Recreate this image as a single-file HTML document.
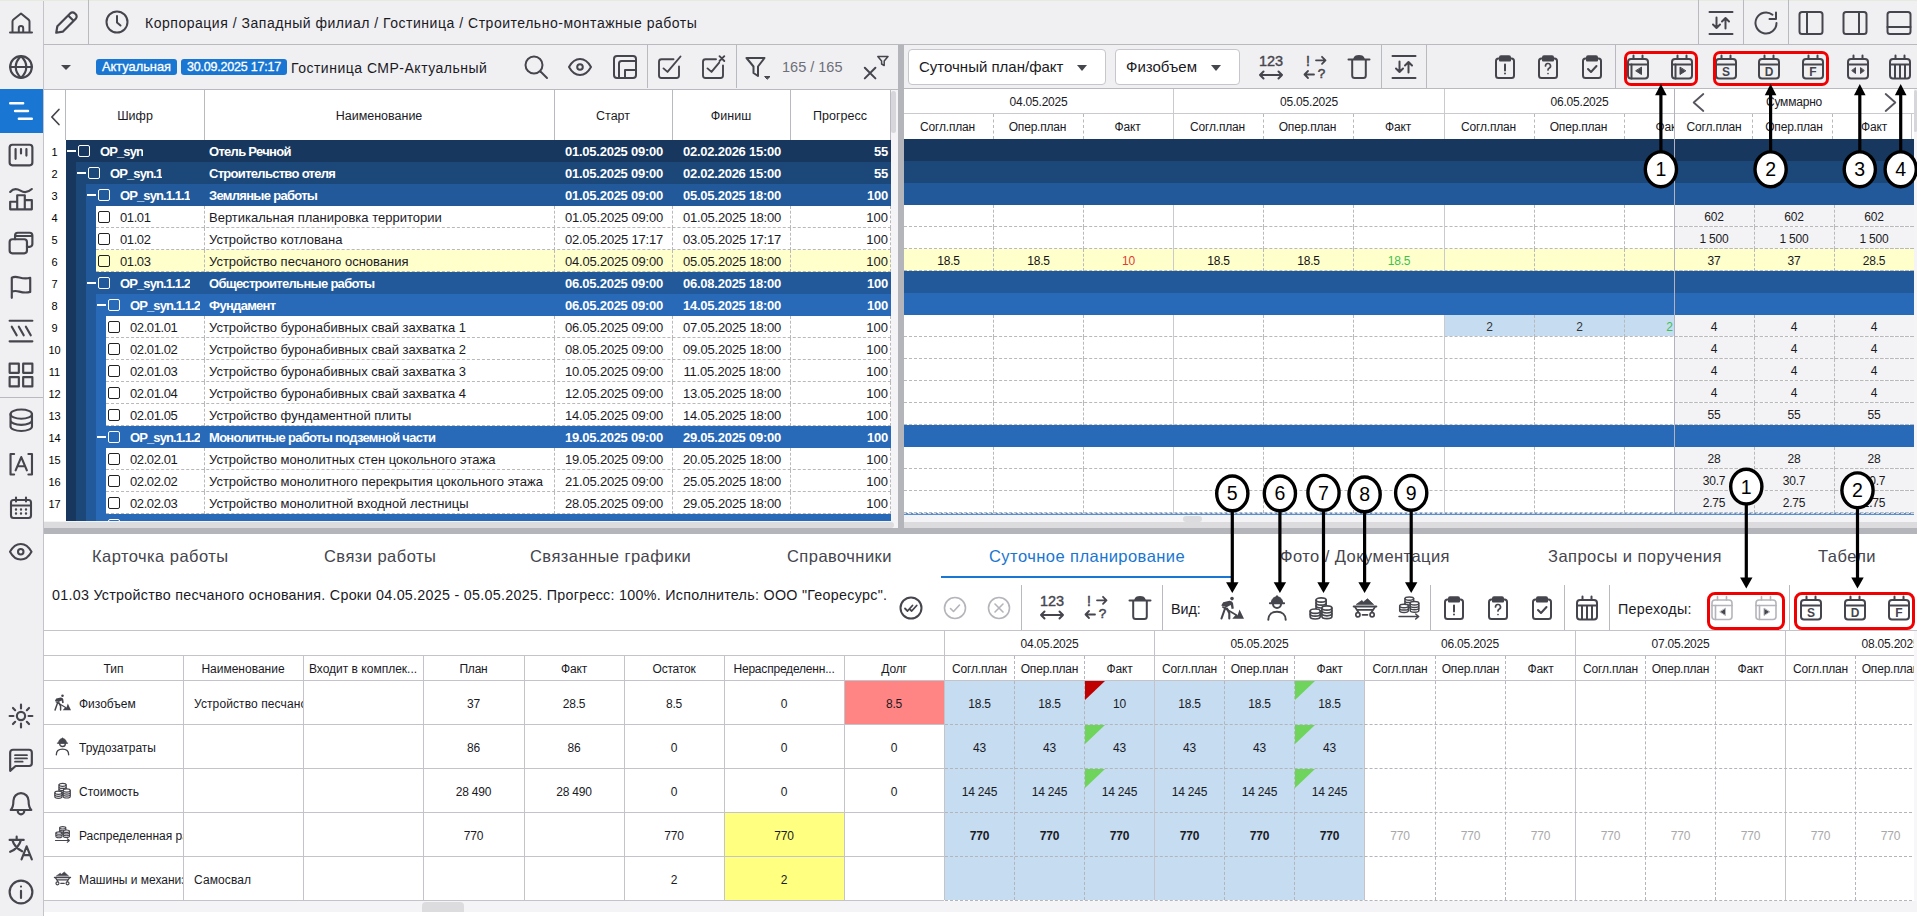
<!DOCTYPE html>
<html lang="ru"><head><meta charset="utf-8"><title>Суточное планирование</title>
<style>
*{box-sizing:border-box}
html,body{margin:0;padding:0}
body{width:1917px;height:916px;overflow:hidden;position:relative;background:#f0f0f3;font-family:"Liberation Sans",sans-serif;color:#1a1a1f;font-size:13px}
.abs{position:absolute}
.ic{position:absolute;fill:none;stroke:#45454d;stroke-width:2;stroke-linecap:round;stroke-linejoin:round;overflow:visible}
.vl{position:absolute;width:1px;background:#b9b9c0}
.hl{position:absolute;height:1px;background:#b9b9c0}
.t{position:absolute;white-space:nowrap}
.c{position:absolute;white-space:nowrap;text-align:center}
.r{position:absolute;white-space:nowrap;text-align:right}
.row{position:absolute;left:0;height:22px;line-height:23px}
.b{font-weight:bold;color:#fff;letter-spacing:-0.25px}
.cb{position:absolute;width:12px;height:12px;border:1.4px solid #222;border-radius:2px;background:#fff}
.cbw{position:absolute;width:12px;height:12px;border:1.4px solid #fff;border-radius:2px}
.mn{position:absolute;width:9px;height:1.5px;background:#fff}
.dv{position:absolute;width:0;border-left:1px dashed #b9b9b9}
.dh{position:absolute;height:0;border-top:1px dashed #b9b9b9}
.g{font-size:12px;letter-spacing:-0.2px}
</style></head>
<body>
<div class="abs" style="left:0;top:0;width:44px;height:916px;background:#f0f0f3;border-right:1px solid #c3c3ca"></div>
<div class="abs" style="left:0;top:89px;width:43px;height:44px;background:#1976d2"></div>
<svg class="ic" style="left:9px;top:11px" width="24" height="24" viewBox="0 0 24 24" ><path d="M3.5 21.5V10.6c0-.8.4-1.5 1-2L12 2.5l7.5 6.1c.6.5 1 1.2 1 2v10.9M1 21.5h22M9.8 21.5v-4.3a2.2 2.2 0 0 1 4.4 0v4.3"/></svg>
<svg class="ic" style="left:8px;top:53.5px" width="26" height="26" viewBox="0 0 24 24" ><circle cx="12" cy="12" r="10"/><path d="M2 12h20M12 2c-6.5 6-6.5 14 0 20M12 2c6.5 6 6.5 14 0 20"/></svg>
<svg class="ic" style="left:8px;top:97.5px;stroke-width:2.2;stroke:#fff" width="26" height="26" viewBox="0 0 24 24" ><path d="M2 4.8h12M6.5 12h12M10 19.2h12"/></svg>
<svg class="ic" style="left:8px;top:141.5px" width="26" height="26" viewBox="0 0 24 24" ><rect x="1.5" y="2.5" width="21" height="19" rx="2.5"/><path d="M7 6.5v9M12 6.5v4M17 6.5v6"/></svg>
<svg class="ic" style="left:8px;top:185.5px" width="26" height="26" viewBox="0 0 24 24" ><path d="M2 21.5h20V13h-6.5v8.5M15.5 21.5V8.5H8.5v13M8.5 14.5H2v7M2 5.5c3.5-4 6.5-3 9.5-1.2s6.5 2.2 10.5-1.5"/></svg>
<svg class="ic" style="left:8px;top:229.5px" width="26" height="26" viewBox="0 0 24 24" ><rect x="1.5" y="8.5" width="16" height="13" rx="2.5"/><path d="M6.5 8.5V5a2.5 2.5 0 0 1 2.5-2.5h11a2.5 2.5 0 0 1 2.5 2.5v8a2.5 2.5 0 0 1-2.5 2.5h-2.5M6.5 5.5h16"/></svg>
<svg class="ic" style="left:8px;top:273.5px" width="26" height="26" viewBox="0 0 24 24" ><path d="M3.5 22V3.5c5-3 8.5 2.5 17 0v13c-8.5 2.5-12-3-17 0"/></svg>
<svg class="ic" style="left:8px;top:317.5px" width="26" height="26" viewBox="0 0 24 24" ><path d="M1.5 2.5h21M1.5 21.5h21M3.5 8l4.5 8M10 8l4.5 8M16.5 8l4.5 8"/></svg>
<svg class="ic" style="left:8px;top:361.5px" width="26" height="26" viewBox="0 0 24 24" ><rect x="1.5" y="1.5" width="8.5" height="8.5"/><rect x="14" y="1.5" width="8.5" height="8.5"/><rect x="1.5" y="14" width="8.5" height="8.5"/><rect x="14" y="14" width="8.5" height="8.5"/></svg>
<div class="hl" style="left:0;top:397px;width:43px"></div>
<svg class="ic" style="left:8.75px;top:407.75px;stroke-width:2.1" width="24.5" height="24.5" viewBox="0 0 24 24" ><ellipse cx="12" cy="6" rx="10.5" ry="4.5"/><path d="M1.5 6v12c0 2.5 4.7 4.5 10.5 4.5s10.5-2 10.5-4.5V6M1.5 12c0 2.5 4.7 4.5 10.5 4.5s10.5-2 10.5-4.5"/></svg>
<svg class="ic" style="left:8.75px;top:451.75px;stroke-width:2.1" width="24.5" height="24.5" viewBox="0 0 24 24" ><path d="M5 2H1.5v20H5M19 2h3.5v20H19M6.5 18l5.5-13 5.5 13M8.3 14h7.4"/></svg>
<svg class="ic" style="left:9px;top:496px;stroke-width:2.1" width="24" height="24" viewBox="0 0 24 24" ><rect x="2" y="4" width="20" height="18" rx="2.5"/><path d="M2 9.5h20M7 1.5v4M17 1.5v4"/><path d="M7 13.5h.01M12 13.5h.01M17 13.5h.01M7 17.5h.01M12 17.5h.01M17 17.5h.01" stroke-width="2.4"/></svg>
<svg class="ic" style="left:9.25px;top:540.25px;stroke-width:2.1" width="23.5" height="23.5" viewBox="0 0 24 24" ><path d="M1 12c3-5.5 7-8 11-8s8 2.5 11 8c-3 5.5-7 8-11 8s-8-2.5-11-8z"/><circle cx="12" cy="12" r="2.8"/></svg>
<svg class="ic" style="left:8px;top:703px" width="26" height="26" viewBox="0 0 24 24" ><circle cx="12" cy="12" r="3.8"/><path d="M12 1.5v3.5M12 19v3.5M1.5 12H5M19 12h3.5M4.6 4.6l2 2M17.4 17.4l2 2M4.6 19.4l2-2M17.4 6.6l2-2"/></svg>
<svg class="ic" style="left:8px;top:747px" width="26" height="26" viewBox="0 0 24 24" ><path d="M2 22V5a2.5 2.5 0 0 1 2.5-2.5h15A2.5 2.5 0 0 1 22 5v10a2.5 2.5 0 0 1-2.5 2.5H7z"/><path d="M6.5 7.5h11M6.5 10.5h11M6.5 13.5h7" stroke-width="1.7"/></svg>
<svg class="ic" style="left:8px;top:791px" width="26" height="26" viewBox="0 0 24 24" ><path d="M2.5 17.5h19c-2-2-2.5-4-2.5-8.5a7 7 0 0 0-14 0c0 4.5-.5 6.5-2.5 8.5zM9 18.5a3 3 0 0 0 6 0"/></svg>
<svg class="ic" style="left:8px;top:835px" width="26" height="26" viewBox="0 0 24 24" ><path d="M1.5 4.5h13M8 1.5v3M4 4.5c1.5 5.5 5 8.5 9 10.5M12 4.5c-1.5 5.5-5 9-10 11M12.5 22.5l4.7-12 4.8 12M14.2 18.5h6"/></svg>
<svg class="ic" style="left:8px;top:879px" width="26" height="26" viewBox="0 0 24 24" ><circle cx="12" cy="12" r="10.5"/><path d="M12 11v6.5M12 7v.01"/></svg>
<div class="abs" style="left:0;top:0;width:1917px;height:1px;background:#e6ebdf"></div>
<div class="hl" style="left:44px;top:44px;width:1873px"></div>
<div class="vl" style="left:88px;top:0;height:44px"></div>
<svg class="ic" style="left:53px;top:10px" width="26" height="26" viewBox="0 0 24 24" ><path d="M3 21l1-6L16 3a2.8 2.8 0 0 1 4 0l1 1a2.8 2.8 0 0 1 0 4L9 20zM14 5l5 5"/></svg>
<svg class="ic" style="left:105px;top:10px" width="24" height="24" viewBox="0 0 24 24" ><circle cx="12" cy="12" r="10.5"/><path d="M12 6v6.5l3.5 3"/></svg>
<div class="t" id="bc" style="left:145px;top:14px;font-size:14px;letter-spacing:0.52px;line-height:18px">Корпорация / Западный филиал / Гостиница / Строительно-монтажные работы</div>
<div class="vl" style="left:1698px;top:0;height:44px"></div>
<div class="vl" style="left:1743px;top:0;height:44px"></div>
<div class="vl" style="left:1788px;top:0;height:44px"></div>
<svg class="ic" style="left:1709px;top:10.5px" width="24" height="24" viewBox="0 0 24 24" ><path d="M0.5 1h23M0.5 23h23M7.5 6.5v10.5M4 13.5l3.5 3.5 3.5-3.5M16.5 17.5V7M13 10.5l3.5-3.5 3.5 3.5"/></svg>
<svg class="ic" style="left:1754px;top:10.5px" width="24" height="24" viewBox="0 0 24 24" ><path d="M22.5 12A10.5 10.5 0 1 1 18.5 3.7M22 1.5V8h-6.5"/></svg>
<svg class="ic" style="left:1799px;top:10.5px" width="24" height="24" viewBox="0 0 24 24" ><rect x="0.5" y="1" width="23" height="22" rx="2.5"/><path d="M8 1v22"/></svg>
<svg class="ic" style="left:1843px;top:10.5px" width="24" height="24" viewBox="0 0 24 24" ><rect x="0.5" y="1" width="23" height="22" rx="2.5"/><path d="M16 1v22"/></svg>
<svg class="ic" style="left:1886.5px;top:10.5px" width="24" height="24" viewBox="0 0 24 24" ><rect x="0.5" y="1" width="23" height="22" rx="2.5"/><path d="M0.5 16h23"/></svg>
<div class="hl" style="left:44px;top:89px;width:854px"></div>
<div class="hl" style="left:903px;top:88px;width:1014px"></div>
<div class="abs" style="left:60.5px;top:64.5px;width:0;height:0;border-left:5.5px solid transparent;border-right:5.5px solid transparent;border-top:5.5px solid #45454d"></div>
<div class="c" id="bd1" style="left:96px;top:59px;width:81px;height:16px;line-height:16px;background:#1976d2;color:#fff;border-radius:3px;font-size:12.8px;-webkit-text-stroke:0.3px #fff">Актуальная</div>
<div class="c" id="bd2" style="left:181px;top:59px;width:106px;height:16px;line-height:16px;background:#1976d2;color:#fff;border-radius:3px;font-size:12.5px;letter-spacing:-0.2px;-webkit-text-stroke:0.3px #fff">30.09.2025 17:17</div>
<div class="t" id="ttl" style="left:291px;top:59px;font-size:14px;letter-spacing:0.5px;line-height:18px">Гостиница СМР-Актуальный</div>
<svg class="ic" style="left:524px;top:55px" width="24" height="24" viewBox="0 0 24 24" ><circle cx="10" cy="10" r="8.5"/><path d="M16.5 16.5L23 23"/></svg>
<svg class="ic" style="left:568px;top:55px" width="24" height="24" viewBox="0 0 24 24" ><path d="M1 12c3-5.5 7-8 11-8s8 2.5 11 8c-3 5.5-7 8-11 8s-8-2.5-11-8z"/><circle cx="12" cy="12" r="2.8"/></svg>
<svg class="ic" style="left:612.5px;top:55px" width="24" height="24" viewBox="0 0 24 24" ><rect x="1" y="1" width="22" height="22" rx="3"/><path d="M6 23V8.5a2.5 2.5 0 0 1 2.5-2.5H23M12 23v-8h11"/></svg>
<svg class="ic" style="left:657px;top:55px" width="24" height="24" viewBox="0 0 24 24" ><path d="M16.5 4.2H4.5A2.5 2.5 0 0 0 2 6.7v13.8A2.5 2.5 0 0 0 4.5 23h15a2.5 2.5 0 0 0 2.5-2.5V11.5M6.5 13.4l4 3.5L23.5 1.5" stroke-width="1.9"/></svg>
<svg class="ic" style="left:701px;top:55px" width="24" height="24" viewBox="0 0 24 24" ><path d="M15 4.2H4.5A2.5 2.5 0 0 0 2 6.7v13.8A2.5 2.5 0 0 0 4.5 23h15a2.5 2.5 0 0 0 2.5-2.5V10.5M6.5 13.4l4 3.5 7.7-9.2M18.5 1.2l4.8 4.8M23.3 1.2l-4.8 4.8" stroke-width="1.9"/></svg>
<svg class="ic" style="left:745px;top:55px" width="24" height="24" viewBox="0 0 24 24" ><path d="M1.5 3h18l-6.5 8.5V21l-4.5-3v-6.5z"/><path d="M20 21.5h5l-2.5 2.5z" fill="#45454d" stroke-width="1"/></svg>
<svg class="ic" style="left:864px;top:55px" width="24" height="24" viewBox="0 0 24 24" ><path d="M0.8 12.8l10.6 10.6M11.4 12.8L0.8 23.4"/><path d="M13.8 1.5h10.2l-3.8 4.5v4.5l-2.6-1.5V6z" stroke-width="1.5"/></svg>
<div class="vl" style="left:647px;top:45px;height:43px"></div>
<div class="vl" style="left:736px;top:45px;height:43px"></div>
<div class="t" id="cnt" style="left:782px;top:58px;font-size:14.5px;line-height:18px;color:#6e6e78">165 / 165</div>
<div class="abs" style="left:908px;top:49px;width:198px;height:36px;background:#fff;border:1px solid #c6c6cc;border-radius:4px"></div>
<div class="t" id="dd1" style="left:919px;top:58px;font-size:15px;line-height:18px">Суточный план/факт</div>
<div class="abs" style="left:1077px;top:65px;width:0;height:0;border-left:5.5px solid transparent;border-right:5.5px solid transparent;border-top:6px solid #45454d"></div>
<div class="abs" style="left:1115px;top:49px;width:125px;height:36px;background:#fff;border:1px solid #c6c6cc;border-radius:4px"></div>
<div class="t" id="dd2" style="left:1126px;top:58px;font-size:15px;line-height:18px">Физобъем</div>
<div class="abs" style="left:1211px;top:65px;width:0;height:0;border-left:5.5px solid transparent;border-right:5.5px solid transparent;border-top:6px solid #45454d"></div>
<div class="c" style="left:1254px;top:53.7px;width:34px;font-size:14.5px;line-height:14px;color:#45454d;-webkit-text-stroke:0.4px #45454d">123</div>
<svg class="ic" style="left:1259px;top:56.5px" width="24" height="24" viewBox="0 0 24 24" ><path d="M1 18h22M4.5 14.5L1 18l3.5 3.5M19.5 14.5L23 18l-3.5 3.5"/></svg>
<svg class="ic" style="left:1303px;top:55px;stroke-width:1.8" width="24" height="24" viewBox="0 0 24 24" ><path d="M13 5.3h9.5M19 1.8l3.5 3.5-3.5 3.5M1.5 19.5H11M5 16l-3.5 3.5L5 23"/></svg>
<div class="c" style="left:1303px;top:53.5px;width:10px;font-size:14px;line-height:14px;color:#45454d;-webkit-text-stroke:0.5px #45454d">!</div>
<div class="c" style="left:1316.5px;top:66.5px;width:10px;font-size:13.5px;line-height:14px;color:#45454d;-webkit-text-stroke:0.5px #45454d">?</div>
<svg class="ic" style="left:1347px;top:55px" width="24" height="24" viewBox="0 0 24 24" ><path d="M1.5 4.5h21M5.2 4.5v16a2.5 2.5 0 0 0 2.5 2.5h8.6a2.5 2.5 0 0 0 2.5-2.5v-16"/><path d="M7.3 3.8c1-3.6 8.4-3.6 9.4 0z" fill="#45454d"/></svg>
<div class="vl" style="left:1381px;top:45px;height:43px"></div>
<div class="vl" style="left:1426px;top:45px;height:43px"></div>
<div class="vl" style="left:1615px;top:45px;height:43px"></div>
<svg class="ic" style="left:1392px;top:55px" width="24" height="24" viewBox="0 0 24 24" ><path d="M0.5 1h23M0.5 23h23M7.5 6.5v10.5M4 13.5l3.5 3.5 3.5-3.5M16.5 17.5V7M13 10.5l3.5-3.5 3.5 3.5"/></svg>
<svg class="ic" style="left:1492.5px;top:55px" width="24" height="24" viewBox="0 0 24 24" ><rect x="3" y="3.5" width="18" height="19.5" rx="2.5"/><path d="M7 5.5V2.3a1 1 0 0 1 1-1h8a1 1 0 0 1 1 1V5.5z" fill="#45454d"/><path d="M12 9.5v6M12 18.5v.01"/></svg>
<svg class="ic" style="left:1536px;top:55px" width="24" height="24" viewBox="0 0 24 24" ><rect x="3" y="3.5" width="18" height="19.5" rx="2.5"/><path d="M7 5.5V2.3a1 1 0 0 1 1-1h8a1 1 0 0 1 1 1V5.5z" fill="#45454d"/><path d="M9.5 11a2.5 2.5 0 1 1 3.5 2.3c-.7.4-1 .9-1 1.7M12 18.5v.01" stroke-width="1.7"/></svg>
<svg class="ic" style="left:1580px;top:55px" width="24" height="24" viewBox="0 0 24 24" ><rect x="3" y="3.5" width="18" height="19.5" rx="2.5"/><path d="M7 5.5V2.3a1 1 0 0 1 1-1h8a1 1 0 0 1 1 1V5.5z" fill="#45454d"/><path d="M8 14l3 3 5.5-6"/></svg>
<svg class="ic" style="left:1626px;top:55px" width="24" height="24" viewBox="0 0 24 24" ><rect x="2" y="4" width="20" height="19.5" rx="3"/><path d="M2 9.5h20M7.5 0.5v3.5M16.5 0.5v3.5"/><path d="M5.5 9.5v14"/><path d="M15.5 12.5v7l-5.5-3.5z" fill="#45454d" stroke-width="1"/></svg>
<svg class="ic" style="left:1669.5px;top:55px" width="24" height="24" viewBox="0 0 24 24" ><rect x="2" y="4" width="20" height="19.5" rx="3"/><path d="M2 9.5h20M7.5 0.5v3.5M16.5 0.5v3.5"/><path d="M5.5 9.5v14"/><path d="M10 12.5v7l5.5-3.5z" fill="#45454d" stroke-width="1"/></svg>
<svg class="ic" style="left:1714px;top:55px" width="24" height="24" viewBox="0 0 24 24" ><rect x="2" y="4" width="20" height="19.5" rx="3"/><path d="M2 9.5h20M7.5 0.5v3.5M16.5 0.5v3.5"/><text x="12" y="21" text-anchor="middle" font-family="Liberation Sans,sans-serif" font-weight="bold" font-size="12" fill="#45454d" stroke="none">S</text></svg>
<svg class="ic" style="left:1757px;top:55px" width="24" height="24" viewBox="0 0 24 24" ><rect x="2" y="4" width="20" height="19.5" rx="3"/><path d="M2 9.5h20M7.5 0.5v3.5M16.5 0.5v3.5"/><text x="12" y="21" text-anchor="middle" font-family="Liberation Sans,sans-serif" font-weight="bold" font-size="12" fill="#45454d" stroke="none">D</text></svg>
<svg class="ic" style="left:1801px;top:55px" width="24" height="24" viewBox="0 0 24 24" ><rect x="2" y="4" width="20" height="19.5" rx="3"/><path d="M2 9.5h20M7.5 0.5v3.5M16.5 0.5v3.5"/><text x="12" y="21" text-anchor="middle" font-family="Liberation Sans,sans-serif" font-weight="bold" font-size="12" fill="#45454d" stroke="none">F</text></svg>
<svg class="ic" style="left:1845.5px;top:55px" width="24" height="24" viewBox="0 0 24 24" ><rect x="2" y="4" width="20" height="19.5" rx="3"/><path d="M2 9.5h20M7.5 0.5v3.5M16.5 0.5v3.5"/><path d="M9.5 13v5.5L6 15.75zM14.5 13v5.5l3.5-2.75z" fill="#45454d" stroke-width="1"/></svg>
<svg class="ic" style="left:1888px;top:55px" width="24" height="24" viewBox="0 0 24 24" ><rect x="2" y="4" width="20" height="19.5" rx="3"/><path d="M2 9.5h20M7.5 0.5v3.5M16.5 0.5v3.5"/><path d="M7 9.5v13.5M12 9.5v13.5M17 9.5v13.5" stroke-linecap="butt"/></svg>
<div class="abs" style="left:1624px;top:51px;width:74px;height:35px;border:3px solid #f00000;border-radius:7px"></div>
<div class="abs" style="left:1713px;top:51px;width:116px;height:35px;border:3px solid #f00000;border-radius:7px"></div>
<div class="abs" id="lp" style="left:44px;top:90px;width:854px;height:438px;overflow:hidden;background:#fff">
<div class="abs" style="left:0;top:0;width:846px;height:50px;background:#fff"></div>
<div class="vl" style="left:21px;top:0;height:50px"></div>
<div class="vl" style="left:160px;top:0;height:50px"></div>
<div class="vl" style="left:510px;top:0;height:50px"></div>
<div class="vl" style="left:628px;top:0;height:50px"></div>
<div class="vl" style="left:746px;top:0;height:50px"></div>
<div class="vl" style="left:846px;top:0;height:50px"></div>
<svg class="ic" style="left:1.5px;top:17px;stroke-width:2.1" width="20" height="20" viewBox="0 0 24 24" ><path d="M15.5 3L7 12l8.5 9"/></svg>
<div class="c hd" style="left:22px;top:17px;width:138px;line-height:18px;font-size:12.5px">Шифр</div>
<div class="c hd" style="left:160px;top:17px;width:350px;line-height:18px;font-size:12.5px">Наименование</div>
<div class="c hd" style="left:510px;top:17px;width:118px;line-height:18px;font-size:12.5px">Старт</div>
<div class="c hd" style="left:628px;top:17px;width:118px;line-height:18px;font-size:12.5px">Финиш</div>
<div class="c hd" style="left:746px;top:17px;width:100px;line-height:18px;font-size:12.5px">Прогресс</div>
<div class="abs" style="left:847px;top:0;width:7px;height:438px;background:#f4f4f6"></div>
<div class="abs" style="left:847px;top:1px;width:5px;height:42px;background:#d6d6db;border-radius:3px"></div>
<div class="row" style="top:50px;width:847px">
<div class="c" style="left:0;top:0;width:21px;font-size:11px;line-height:24px;color:#000">1</div>
<div class="abs" style="left:22px;top:0;width:825px;height:22px;background:#17375e"></div>
<div class="mn" style="left:22.5px;top:10px"></div>
<div class="cbw" style="left:34px;top:5px"></div>
<div class="t b" style="letter-spacing:-0.9px;left:56px;top:0;max-width:104px;overflow:hidden">OP_syn</div>
<div class="t b" style="letter-spacing:-0.7px;left:165px;top:0">Отель Речной</div>
<div class="c b" style="left:511px;top:0;width:118px">01.05.2025 09:00</div>
<div class="c b" style="left:629px;top:0;width:118px">02.02.2026 15:00</div>
<div class="r b" style="left:746px;top:0;width:98px">55</div>
</div>
<div class="row" style="top:72px;width:847px">
<div class="c" style="left:0;top:0;width:21px;font-size:11px;line-height:24px;color:#000">2</div>
<div class="abs" style="left:22px;top:0;width:10px;height:22px;background:#17375e"></div>
<div class="abs" style="left:32px;top:0;width:815px;height:22px;background:#1c4779"></div>
<div class="mn" style="left:32.5px;top:10px"></div>
<div class="cbw" style="left:44px;top:5px"></div>
<div class="t b" style="letter-spacing:-0.9px;left:66px;top:0;max-width:94px;overflow:hidden">OP_syn.1</div>
<div class="t b" style="letter-spacing:-0.7px;left:165px;top:0">Строительство отеля</div>
<div class="c b" style="left:511px;top:0;width:118px">01.05.2025 09:00</div>
<div class="c b" style="left:629px;top:0;width:118px">02.02.2026 15:00</div>
<div class="r b" style="left:746px;top:0;width:98px">55</div>
</div>
<div class="row" style="top:94px;width:847px">
<div class="c" style="left:0;top:0;width:21px;font-size:11px;line-height:24px;color:#000">3</div>
<div class="abs" style="left:22px;top:0;width:10px;height:22px;background:#17375e"></div>
<div class="abs" style="left:32px;top:0;width:10px;height:22px;background:#1c4779"></div>
<div class="abs" style="left:42px;top:0;width:805px;height:22px;background:#21599b"></div>
<div class="mn" style="left:42.5px;top:10px"></div>
<div class="cbw" style="left:54px;top:5px"></div>
<div class="t b" style="letter-spacing:-0.9px;left:76px;top:0;max-width:84px;overflow:hidden">OP_syn.1.1.1</div>
<div class="t b" style="letter-spacing:-0.7px;left:165px;top:0">Земляные работы</div>
<div class="c b" style="left:511px;top:0;width:118px">01.05.2025 09:00</div>
<div class="c b" style="left:629px;top:0;width:118px">05.05.2025 18:00</div>
<div class="r b" style="left:746px;top:0;width:98px">100</div>
</div>
<div class="row" style="top:116px;width:847px">
<div class="c" style="left:0;top:0;width:21px;font-size:11px;line-height:24px;color:#000">4</div>
<div class="abs" style="left:22px;top:0;width:10px;height:22px;background:#17375e"></div>
<div class="abs" style="left:32px;top:0;width:10px;height:22px;background:#1c4779"></div>
<div class="abs" style="left:42px;top:0;width:10px;height:22px;background:#21599b"></div>
<div class="abs" style="left:52px;top:0;width:795px;height:22px;background:#fff"></div>
<div class="dh" style="left:52px;top:21px;width:795px"></div>
<div class="dv" style="left:160px;top:0;height:22px"></div>
<div class="dv" style="left:510px;top:0;height:22px"></div>
<div class="dv" style="left:628px;top:0;height:22px"></div>
<div class="dv" style="left:746px;top:0;height:22px"></div>
<div class="dv" style="left:846px;top:0;height:22px"></div>
<div class="cb" style="left:54px;top:5px;background:#fff"></div>
<div class="t n" style="letter-spacing:-0.4px;left:76px;top:0">01.01</div>
<div class="t n" style="left:165px;top:0">Вертикальная планировка территории</div>
<div class="c n" style="letter-spacing:-0.2px;left:511px;top:0;width:118px">01.05.2025 09:00</div>
<div class="c n" style="letter-spacing:-0.2px;left:629px;top:0;width:118px">01.05.2025 18:00</div>
<div class="r n" style="left:746px;top:0;width:98px">100</div>
</div>
<div class="row" style="top:138px;width:847px">
<div class="c" style="left:0;top:0;width:21px;font-size:11px;line-height:24px;color:#000">5</div>
<div class="abs" style="left:22px;top:0;width:10px;height:22px;background:#17375e"></div>
<div class="abs" style="left:32px;top:0;width:10px;height:22px;background:#1c4779"></div>
<div class="abs" style="left:42px;top:0;width:10px;height:22px;background:#21599b"></div>
<div class="abs" style="left:52px;top:0;width:795px;height:22px;background:#fff"></div>
<div class="dh" style="left:52px;top:21px;width:795px"></div>
<div class="dv" style="left:160px;top:0;height:22px"></div>
<div class="dv" style="left:510px;top:0;height:22px"></div>
<div class="dv" style="left:628px;top:0;height:22px"></div>
<div class="dv" style="left:746px;top:0;height:22px"></div>
<div class="dv" style="left:846px;top:0;height:22px"></div>
<div class="cb" style="left:54px;top:5px;background:#fff"></div>
<div class="t n" style="letter-spacing:-0.4px;left:76px;top:0">01.02</div>
<div class="t n" style="left:165px;top:0">Устройство котлована</div>
<div class="c n" style="letter-spacing:-0.2px;left:511px;top:0;width:118px">02.05.2025 17:17</div>
<div class="c n" style="letter-spacing:-0.2px;left:629px;top:0;width:118px">03.05.2025 17:17</div>
<div class="r n" style="left:746px;top:0;width:98px">100</div>
</div>
<div class="row" style="top:160px;width:847px">
<div class="c" style="left:0;top:0;width:21px;font-size:11px;line-height:24px;color:#000">6</div>
<div class="abs" style="left:22px;top:0;width:10px;height:22px;background:#17375e"></div>
<div class="abs" style="left:32px;top:0;width:10px;height:22px;background:#1c4779"></div>
<div class="abs" style="left:42px;top:0;width:10px;height:22px;background:#21599b"></div>
<div class="abs" style="left:52px;top:0;width:795px;height:22px;background:#ffffcc"></div>
<div class="dh" style="left:52px;top:21px;width:795px"></div>
<div class="dv" style="left:160px;top:0;height:22px"></div>
<div class="dv" style="left:510px;top:0;height:22px"></div>
<div class="dv" style="left:628px;top:0;height:22px"></div>
<div class="dv" style="left:746px;top:0;height:22px"></div>
<div class="dv" style="left:846px;top:0;height:22px"></div>
<div class="cb" style="left:54px;top:5px;background:#ffffcc"></div>
<div class="t n" style="letter-spacing:-0.4px;left:76px;top:0">01.03</div>
<div class="t n" style="left:165px;top:0">Устройство песчаного основания</div>
<div class="c n" style="letter-spacing:-0.2px;left:511px;top:0;width:118px">04.05.2025 09:00</div>
<div class="c n" style="letter-spacing:-0.2px;left:629px;top:0;width:118px">05.05.2025 18:00</div>
<div class="r n" style="left:746px;top:0;width:98px">100</div>
</div>
<div class="row" style="top:182px;width:847px">
<div class="c" style="left:0;top:0;width:21px;font-size:11px;line-height:24px;color:#000">7</div>
<div class="abs" style="left:22px;top:0;width:10px;height:22px;background:#17375e"></div>
<div class="abs" style="left:32px;top:0;width:10px;height:22px;background:#1c4779"></div>
<div class="abs" style="left:42px;top:0;width:805px;height:22px;background:#21599b"></div>
<div class="mn" style="left:42.5px;top:10px"></div>
<div class="cbw" style="left:54px;top:5px"></div>
<div class="t b" style="letter-spacing:-0.9px;left:76px;top:0;max-width:84px;overflow:hidden">OP_syn.1.1.2</div>
<div class="t b" style="letter-spacing:-0.7px;left:165px;top:0">Общестроительные работы</div>
<div class="c b" style="left:511px;top:0;width:118px">06.05.2025 09:00</div>
<div class="c b" style="left:629px;top:0;width:118px">06.08.2025 18:00</div>
<div class="r b" style="left:746px;top:0;width:98px">100</div>
</div>
<div class="row" style="top:204px;width:847px">
<div class="c" style="left:0;top:0;width:21px;font-size:11px;line-height:24px;color:#000">8</div>
<div class="abs" style="left:22px;top:0;width:10px;height:22px;background:#17375e"></div>
<div class="abs" style="left:32px;top:0;width:10px;height:22px;background:#1c4779"></div>
<div class="abs" style="left:42px;top:0;width:10px;height:22px;background:#21599b"></div>
<div class="abs" style="left:52px;top:0;width:795px;height:22px;background:#2869b8"></div>
<div class="mn" style="left:52.5px;top:10px"></div>
<div class="cbw" style="left:64px;top:5px"></div>
<div class="t b" style="letter-spacing:-0.9px;left:86px;top:0;max-width:74px;overflow:hidden">OP_syn.1.1.2</div>
<div class="t b" style="letter-spacing:-0.7px;left:165px;top:0">Фундамент</div>
<div class="c b" style="left:511px;top:0;width:118px">06.05.2025 09:00</div>
<div class="c b" style="left:629px;top:0;width:118px">14.05.2025 18:00</div>
<div class="r b" style="left:746px;top:0;width:98px">100</div>
</div>
<div class="row" style="top:226px;width:847px">
<div class="c" style="left:0;top:0;width:21px;font-size:11px;line-height:24px;color:#000">9</div>
<div class="abs" style="left:22px;top:0;width:10px;height:22px;background:#17375e"></div>
<div class="abs" style="left:32px;top:0;width:10px;height:22px;background:#1c4779"></div>
<div class="abs" style="left:42px;top:0;width:10px;height:22px;background:#21599b"></div>
<div class="abs" style="left:52px;top:0;width:10px;height:22px;background:#2869b8"></div>
<div class="abs" style="left:62px;top:0;width:785px;height:22px;background:#fff"></div>
<div class="dh" style="left:62px;top:21px;width:785px"></div>
<div class="dv" style="left:160px;top:0;height:22px"></div>
<div class="dv" style="left:510px;top:0;height:22px"></div>
<div class="dv" style="left:628px;top:0;height:22px"></div>
<div class="dv" style="left:746px;top:0;height:22px"></div>
<div class="dv" style="left:846px;top:0;height:22px"></div>
<div class="cb" style="left:64px;top:5px;background:#fff"></div>
<div class="t n" style="letter-spacing:-0.4px;left:86px;top:0">02.01.01</div>
<div class="t n" style="left:165px;top:0">Устройство буронабивных свай захватка 1</div>
<div class="c n" style="letter-spacing:-0.2px;left:511px;top:0;width:118px">06.05.2025 09:00</div>
<div class="c n" style="letter-spacing:-0.2px;left:629px;top:0;width:118px">07.05.2025 18:00</div>
<div class="r n" style="left:746px;top:0;width:98px">100</div>
</div>
<div class="row" style="top:248px;width:847px">
<div class="c" style="left:0;top:0;width:21px;font-size:11px;line-height:24px;color:#000">10</div>
<div class="abs" style="left:22px;top:0;width:10px;height:22px;background:#17375e"></div>
<div class="abs" style="left:32px;top:0;width:10px;height:22px;background:#1c4779"></div>
<div class="abs" style="left:42px;top:0;width:10px;height:22px;background:#21599b"></div>
<div class="abs" style="left:52px;top:0;width:10px;height:22px;background:#2869b8"></div>
<div class="abs" style="left:62px;top:0;width:785px;height:22px;background:#fff"></div>
<div class="dh" style="left:62px;top:21px;width:785px"></div>
<div class="dv" style="left:160px;top:0;height:22px"></div>
<div class="dv" style="left:510px;top:0;height:22px"></div>
<div class="dv" style="left:628px;top:0;height:22px"></div>
<div class="dv" style="left:746px;top:0;height:22px"></div>
<div class="dv" style="left:846px;top:0;height:22px"></div>
<div class="cb" style="left:64px;top:5px;background:#fff"></div>
<div class="t n" style="letter-spacing:-0.4px;left:86px;top:0">02.01.02</div>
<div class="t n" style="left:165px;top:0">Устройство буронабивных свай захватка 2</div>
<div class="c n" style="letter-spacing:-0.2px;left:511px;top:0;width:118px">08.05.2025 09:00</div>
<div class="c n" style="letter-spacing:-0.2px;left:629px;top:0;width:118px">09.05.2025 18:00</div>
<div class="r n" style="left:746px;top:0;width:98px">100</div>
</div>
<div class="row" style="top:270px;width:847px">
<div class="c" style="left:0;top:0;width:21px;font-size:11px;line-height:24px;color:#000">11</div>
<div class="abs" style="left:22px;top:0;width:10px;height:22px;background:#17375e"></div>
<div class="abs" style="left:32px;top:0;width:10px;height:22px;background:#1c4779"></div>
<div class="abs" style="left:42px;top:0;width:10px;height:22px;background:#21599b"></div>
<div class="abs" style="left:52px;top:0;width:10px;height:22px;background:#2869b8"></div>
<div class="abs" style="left:62px;top:0;width:785px;height:22px;background:#fff"></div>
<div class="dh" style="left:62px;top:21px;width:785px"></div>
<div class="dv" style="left:160px;top:0;height:22px"></div>
<div class="dv" style="left:510px;top:0;height:22px"></div>
<div class="dv" style="left:628px;top:0;height:22px"></div>
<div class="dv" style="left:746px;top:0;height:22px"></div>
<div class="dv" style="left:846px;top:0;height:22px"></div>
<div class="cb" style="left:64px;top:5px;background:#fff"></div>
<div class="t n" style="letter-spacing:-0.4px;left:86px;top:0">02.01.03</div>
<div class="t n" style="left:165px;top:0">Устройство буронабивных свай захватка 3</div>
<div class="c n" style="letter-spacing:-0.2px;left:511px;top:0;width:118px">10.05.2025 09:00</div>
<div class="c n" style="letter-spacing:-0.2px;left:629px;top:0;width:118px">11.05.2025 18:00</div>
<div class="r n" style="left:746px;top:0;width:98px">100</div>
</div>
<div class="row" style="top:292px;width:847px">
<div class="c" style="left:0;top:0;width:21px;font-size:11px;line-height:24px;color:#000">12</div>
<div class="abs" style="left:22px;top:0;width:10px;height:22px;background:#17375e"></div>
<div class="abs" style="left:32px;top:0;width:10px;height:22px;background:#1c4779"></div>
<div class="abs" style="left:42px;top:0;width:10px;height:22px;background:#21599b"></div>
<div class="abs" style="left:52px;top:0;width:10px;height:22px;background:#2869b8"></div>
<div class="abs" style="left:62px;top:0;width:785px;height:22px;background:#fff"></div>
<div class="dh" style="left:62px;top:21px;width:785px"></div>
<div class="dv" style="left:160px;top:0;height:22px"></div>
<div class="dv" style="left:510px;top:0;height:22px"></div>
<div class="dv" style="left:628px;top:0;height:22px"></div>
<div class="dv" style="left:746px;top:0;height:22px"></div>
<div class="dv" style="left:846px;top:0;height:22px"></div>
<div class="cb" style="left:64px;top:5px;background:#fff"></div>
<div class="t n" style="letter-spacing:-0.4px;left:86px;top:0">02.01.04</div>
<div class="t n" style="left:165px;top:0">Устройство буронабивных свай захватка 4</div>
<div class="c n" style="letter-spacing:-0.2px;left:511px;top:0;width:118px">12.05.2025 09:00</div>
<div class="c n" style="letter-spacing:-0.2px;left:629px;top:0;width:118px">13.05.2025 18:00</div>
<div class="r n" style="left:746px;top:0;width:98px">100</div>
</div>
<div class="row" style="top:314px;width:847px">
<div class="c" style="left:0;top:0;width:21px;font-size:11px;line-height:24px;color:#000">13</div>
<div class="abs" style="left:22px;top:0;width:10px;height:22px;background:#17375e"></div>
<div class="abs" style="left:32px;top:0;width:10px;height:22px;background:#1c4779"></div>
<div class="abs" style="left:42px;top:0;width:10px;height:22px;background:#21599b"></div>
<div class="abs" style="left:52px;top:0;width:10px;height:22px;background:#2869b8"></div>
<div class="abs" style="left:62px;top:0;width:785px;height:22px;background:#fff"></div>
<div class="dh" style="left:62px;top:21px;width:785px"></div>
<div class="dv" style="left:160px;top:0;height:22px"></div>
<div class="dv" style="left:510px;top:0;height:22px"></div>
<div class="dv" style="left:628px;top:0;height:22px"></div>
<div class="dv" style="left:746px;top:0;height:22px"></div>
<div class="dv" style="left:846px;top:0;height:22px"></div>
<div class="cb" style="left:64px;top:5px;background:#fff"></div>
<div class="t n" style="letter-spacing:-0.4px;left:86px;top:0">02.01.05</div>
<div class="t n" style="left:165px;top:0">Устройство фундаментной плиты</div>
<div class="c n" style="letter-spacing:-0.2px;left:511px;top:0;width:118px">14.05.2025 09:00</div>
<div class="c n" style="letter-spacing:-0.2px;left:629px;top:0;width:118px">14.05.2025 18:00</div>
<div class="r n" style="left:746px;top:0;width:98px">100</div>
</div>
<div class="row" style="top:336px;width:847px">
<div class="c" style="left:0;top:0;width:21px;font-size:11px;line-height:24px;color:#000">14</div>
<div class="abs" style="left:22px;top:0;width:10px;height:22px;background:#17375e"></div>
<div class="abs" style="left:32px;top:0;width:10px;height:22px;background:#1c4779"></div>
<div class="abs" style="left:42px;top:0;width:10px;height:22px;background:#21599b"></div>
<div class="abs" style="left:52px;top:0;width:795px;height:22px;background:#2869b8"></div>
<div class="mn" style="left:52.5px;top:10px"></div>
<div class="cbw" style="left:64px;top:5px"></div>
<div class="t b" style="letter-spacing:-0.9px;left:86px;top:0;max-width:74px;overflow:hidden">OP_syn.1.1.2</div>
<div class="t b" style="letter-spacing:-0.7px;left:165px;top:0">Монолитные работы подземной части</div>
<div class="c b" style="left:511px;top:0;width:118px">19.05.2025 09:00</div>
<div class="c b" style="left:629px;top:0;width:118px">29.05.2025 09:00</div>
<div class="r b" style="left:746px;top:0;width:98px">100</div>
</div>
<div class="row" style="top:358px;width:847px">
<div class="c" style="left:0;top:0;width:21px;font-size:11px;line-height:24px;color:#000">15</div>
<div class="abs" style="left:22px;top:0;width:10px;height:22px;background:#17375e"></div>
<div class="abs" style="left:32px;top:0;width:10px;height:22px;background:#1c4779"></div>
<div class="abs" style="left:42px;top:0;width:10px;height:22px;background:#21599b"></div>
<div class="abs" style="left:52px;top:0;width:10px;height:22px;background:#2869b8"></div>
<div class="abs" style="left:62px;top:0;width:785px;height:22px;background:#fff"></div>
<div class="dh" style="left:62px;top:21px;width:785px"></div>
<div class="dv" style="left:160px;top:0;height:22px"></div>
<div class="dv" style="left:510px;top:0;height:22px"></div>
<div class="dv" style="left:628px;top:0;height:22px"></div>
<div class="dv" style="left:746px;top:0;height:22px"></div>
<div class="dv" style="left:846px;top:0;height:22px"></div>
<div class="cb" style="left:64px;top:5px;background:#fff"></div>
<div class="t n" style="letter-spacing:-0.4px;left:86px;top:0">02.02.01</div>
<div class="t n" style="left:165px;top:0">Устройство монолитных стен цокольного этажа</div>
<div class="c n" style="letter-spacing:-0.2px;left:511px;top:0;width:118px">19.05.2025 09:00</div>
<div class="c n" style="letter-spacing:-0.2px;left:629px;top:0;width:118px">20.05.2025 18:00</div>
<div class="r n" style="left:746px;top:0;width:98px">100</div>
</div>
<div class="row" style="top:380px;width:847px">
<div class="c" style="left:0;top:0;width:21px;font-size:11px;line-height:24px;color:#000">16</div>
<div class="abs" style="left:22px;top:0;width:10px;height:22px;background:#17375e"></div>
<div class="abs" style="left:32px;top:0;width:10px;height:22px;background:#1c4779"></div>
<div class="abs" style="left:42px;top:0;width:10px;height:22px;background:#21599b"></div>
<div class="abs" style="left:52px;top:0;width:10px;height:22px;background:#2869b8"></div>
<div class="abs" style="left:62px;top:0;width:785px;height:22px;background:#fff"></div>
<div class="dh" style="left:62px;top:21px;width:785px"></div>
<div class="dv" style="left:160px;top:0;height:22px"></div>
<div class="dv" style="left:510px;top:0;height:22px"></div>
<div class="dv" style="left:628px;top:0;height:22px"></div>
<div class="dv" style="left:746px;top:0;height:22px"></div>
<div class="dv" style="left:846px;top:0;height:22px"></div>
<div class="cb" style="left:64px;top:5px;background:#fff"></div>
<div class="t n" style="letter-spacing:-0.4px;left:86px;top:0">02.02.02</div>
<div class="t n" style="left:165px;top:0">Устройство монолитного перекрытия цокольного этажа</div>
<div class="c n" style="letter-spacing:-0.2px;left:511px;top:0;width:118px">21.05.2025 09:00</div>
<div class="c n" style="letter-spacing:-0.2px;left:629px;top:0;width:118px">25.05.2025 18:00</div>
<div class="r n" style="left:746px;top:0;width:98px">100</div>
</div>
<div class="row" style="top:402px;width:847px">
<div class="c" style="left:0;top:0;width:21px;font-size:11px;line-height:24px;color:#000">17</div>
<div class="abs" style="left:22px;top:0;width:10px;height:22px;background:#17375e"></div>
<div class="abs" style="left:32px;top:0;width:10px;height:22px;background:#1c4779"></div>
<div class="abs" style="left:42px;top:0;width:10px;height:22px;background:#21599b"></div>
<div class="abs" style="left:52px;top:0;width:10px;height:22px;background:#2869b8"></div>
<div class="abs" style="left:62px;top:0;width:785px;height:22px;background:#fff"></div>
<div class="dh" style="left:62px;top:21px;width:785px"></div>
<div class="dv" style="left:160px;top:0;height:22px"></div>
<div class="dv" style="left:510px;top:0;height:22px"></div>
<div class="dv" style="left:628px;top:0;height:22px"></div>
<div class="dv" style="left:746px;top:0;height:22px"></div>
<div class="dv" style="left:846px;top:0;height:22px"></div>
<div class="cb" style="left:64px;top:5px;background:#fff"></div>
<div class="t n" style="letter-spacing:-0.4px;left:86px;top:0">02.02.03</div>
<div class="t n" style="left:165px;top:0">Устройство монолитной входной лестницы</div>
<div class="c n" style="letter-spacing:-0.2px;left:511px;top:0;width:118px">28.05.2025 09:00</div>
<div class="c n" style="letter-spacing:-0.2px;left:629px;top:0;width:118px">29.05.2025 18:00</div>
<div class="r n" style="left:746px;top:0;width:98px">100</div>
</div>
<div class="abs" style="left:22px;top:424px;width:10px;height:7px;background:#17375e"></div>
<div class="abs" style="left:32px;top:424px;width:10px;height:7px;background:#1c4779"></div>
<div class="abs" style="left:42px;top:424px;width:10px;height:7px;background:#21599b"></div>
<div class="abs" style="left:52px;top:424px;width:795px;height:7px;background:#2869b8"></div>
<div class="cbw" style="left:64px;top:429px"></div>
<div class="abs" style="left:0;top:431px;width:854px;height:7px;background:#f4f4f6"></div>
<div class="abs" style="left:-6px;top:432px;width:856px;height:6px;background:#dcdcdf;border-radius:3px"></div>
</div>
<div class="abs" id="rp" style="left:903px;top:89px;width:1014px;height:439px;overflow:hidden;background:#fff">
<div class="hl" style="left:0;top:24px;width:1014px;background:#c9c9ce"></div>
<div class="hl" style="left:0;top:50px;width:1014px;background:#c9c9ce"></div>
<div class="c g" style="left:1px;top:4px;width:269px;line-height:18px">04.05.2025</div>
<div class="c g" style="left:0px;top:29px;width:89px;line-height:18px">Согл.план</div>
<div class="dv" style="left:90px;top:25px;height:25px"></div>
<div class="c g" style="left:90px;top:29px;width:89px;line-height:18px">Опер.план</div>
<div class="dv" style="left:180px;top:25px;height:25px"></div>
<div class="c g" style="left:180px;top:29px;width:89px;line-height:18px">Факт</div>
<div class="vl" style="left:270px;top:0;height:437px;background:#c9c9ce"></div>
<div class="c g" style="left:271px;top:4px;width:270px;line-height:18px">05.05.2025</div>
<div class="c g" style="left:270px;top:29px;width:89px;line-height:18px">Согл.план</div>
<div class="dv" style="left:360px;top:25px;height:25px"></div>
<div class="c g" style="left:360px;top:29px;width:89px;line-height:18px">Опер.план</div>
<div class="dv" style="left:450px;top:25px;height:25px"></div>
<div class="c g" style="left:450px;top:29px;width:90px;line-height:18px">Факт</div>
<div class="vl" style="left:541px;top:0;height:437px;background:#c9c9ce"></div>
<div class="c g" style="left:542px;top:4px;width:269px;line-height:18px">06.05.2025</div>
<div class="c g" style="left:541px;top:29px;width:89px;line-height:18px">Согл.план</div>
<div class="dv" style="left:631px;top:25px;height:25px"></div>
<div class="c g" style="left:631px;top:29px;width:89px;line-height:18px">Опер.план</div>
<div class="dv" style="left:721px;top:25px;height:25px"></div>
<div class="c g" style="left:721px;top:29px;width:89px;line-height:18px">Факт</div>
<div class="vl" style="left:811px;top:0;height:437px;background:#c9c9ce"></div>
<div class="abs" style="left:1px;top:50px;width:1010px;height:22px;background:#17375e"></div>
<div class="abs" style="left:1px;top:72px;width:1010px;height:22px;background:#1c4779"></div>
<div class="abs" style="left:1px;top:94px;width:1010px;height:22px;background:#21599b"></div>
<div class="abs" style="left:1px;top:116px;width:770px;height:22px;background:#fff"></div>
<div class="dh" style="left:1px;top:137px;width:1009px"></div>
<div class="dv" style="left:90px;top:116px;height:22px"></div>
<div class="dv" style="left:180px;top:116px;height:22px"></div>
<div class="vl" style="left:270px;top:116px;height:22px;background:#c9c9ce"></div>
<div class="dv" style="left:360px;top:116px;height:22px"></div>
<div class="dv" style="left:450px;top:116px;height:22px"></div>
<div class="vl" style="left:541px;top:116px;height:22px;background:#c9c9ce"></div>
<div class="dv" style="left:631px;top:116px;height:22px"></div>
<div class="dv" style="left:721px;top:116px;height:22px"></div>
<div class="abs" style="left:1px;top:138px;width:770px;height:22px;background:#fff"></div>
<div class="dh" style="left:1px;top:159px;width:1009px"></div>
<div class="dv" style="left:90px;top:138px;height:22px"></div>
<div class="dv" style="left:180px;top:138px;height:22px"></div>
<div class="vl" style="left:270px;top:138px;height:22px;background:#c9c9ce"></div>
<div class="dv" style="left:360px;top:138px;height:22px"></div>
<div class="dv" style="left:450px;top:138px;height:22px"></div>
<div class="vl" style="left:541px;top:138px;height:22px;background:#c9c9ce"></div>
<div class="dv" style="left:631px;top:138px;height:22px"></div>
<div class="dv" style="left:721px;top:138px;height:22px"></div>
<div class="abs" style="left:1px;top:160px;width:770px;height:22px;background:#ffffcc"></div>
<div class="dh" style="left:1px;top:181px;width:1009px"></div>
<div class="dv" style="left:90px;top:160px;height:22px"></div>
<div class="dv" style="left:180px;top:160px;height:22px"></div>
<div class="vl" style="left:270px;top:160px;height:22px;background:#c9c9ce"></div>
<div class="dv" style="left:360px;top:160px;height:22px"></div>
<div class="dv" style="left:450px;top:160px;height:22px"></div>
<div class="vl" style="left:541px;top:160px;height:22px;background:#c9c9ce"></div>
<div class="dv" style="left:631px;top:160px;height:22px"></div>
<div class="dv" style="left:721px;top:160px;height:22px"></div>
<div class="c g" style="left:1px;top:160px;width:89px;line-height:24px;color:#111">18.5</div>
<div class="c g" style="left:91px;top:160px;width:89px;line-height:24px;color:#111">18.5</div>
<div class="c g" style="left:181px;top:160px;width:89px;line-height:24px;color:#e53935">10</div>
<div class="c g" style="left:271px;top:160px;width:89px;line-height:24px;color:#111">18.5</div>
<div class="c g" style="left:361px;top:160px;width:89px;line-height:24px;color:#111">18.5</div>
<div class="c g" style="left:451px;top:160px;width:90px;line-height:24px;color:#3fbf4f">18.5</div>
<div class="abs" style="left:1px;top:182px;width:1010px;height:22px;background:#21599b"></div>
<div class="abs" style="left:1px;top:204px;width:1010px;height:22px;background:#2869b8"></div>
<div class="abs" style="left:1px;top:226px;width:770px;height:22px;background:#fff"></div>
<div class="abs" style="left:542px;top:226px;width:229px;height:21px;background:#c5dcf1"></div>
<div class="c g" style="left:542px;top:226px;width:89px;line-height:24px;color:#333">2</div>
<div class="c g" style="left:632px;top:226px;width:89px;line-height:24px;color:#333">2</div>
<div class="c g" style="left:722px;top:226px;width:89px;line-height:24px;color:#3fbf4f">2</div>
<div class="dh" style="left:1px;top:247px;width:1009px"></div>
<div class="dv" style="left:90px;top:226px;height:22px"></div>
<div class="dv" style="left:180px;top:226px;height:22px"></div>
<div class="vl" style="left:270px;top:226px;height:22px;background:#c9c9ce"></div>
<div class="dv" style="left:360px;top:226px;height:22px"></div>
<div class="dv" style="left:450px;top:226px;height:22px"></div>
<div class="vl" style="left:541px;top:226px;height:22px;background:#c9c9ce"></div>
<div class="dv" style="left:631px;top:226px;height:22px"></div>
<div class="dv" style="left:721px;top:226px;height:22px"></div>
<div class="abs" style="left:1px;top:248px;width:770px;height:22px;background:#fff"></div>
<div class="dh" style="left:1px;top:269px;width:1009px"></div>
<div class="dv" style="left:90px;top:248px;height:22px"></div>
<div class="dv" style="left:180px;top:248px;height:22px"></div>
<div class="vl" style="left:270px;top:248px;height:22px;background:#c9c9ce"></div>
<div class="dv" style="left:360px;top:248px;height:22px"></div>
<div class="dv" style="left:450px;top:248px;height:22px"></div>
<div class="vl" style="left:541px;top:248px;height:22px;background:#c9c9ce"></div>
<div class="dv" style="left:631px;top:248px;height:22px"></div>
<div class="dv" style="left:721px;top:248px;height:22px"></div>
<div class="abs" style="left:1px;top:270px;width:770px;height:22px;background:#fff"></div>
<div class="dh" style="left:1px;top:291px;width:1009px"></div>
<div class="dv" style="left:90px;top:270px;height:22px"></div>
<div class="dv" style="left:180px;top:270px;height:22px"></div>
<div class="vl" style="left:270px;top:270px;height:22px;background:#c9c9ce"></div>
<div class="dv" style="left:360px;top:270px;height:22px"></div>
<div class="dv" style="left:450px;top:270px;height:22px"></div>
<div class="vl" style="left:541px;top:270px;height:22px;background:#c9c9ce"></div>
<div class="dv" style="left:631px;top:270px;height:22px"></div>
<div class="dv" style="left:721px;top:270px;height:22px"></div>
<div class="abs" style="left:1px;top:292px;width:770px;height:22px;background:#fff"></div>
<div class="dh" style="left:1px;top:313px;width:1009px"></div>
<div class="dv" style="left:90px;top:292px;height:22px"></div>
<div class="dv" style="left:180px;top:292px;height:22px"></div>
<div class="vl" style="left:270px;top:292px;height:22px;background:#c9c9ce"></div>
<div class="dv" style="left:360px;top:292px;height:22px"></div>
<div class="dv" style="left:450px;top:292px;height:22px"></div>
<div class="vl" style="left:541px;top:292px;height:22px;background:#c9c9ce"></div>
<div class="dv" style="left:631px;top:292px;height:22px"></div>
<div class="dv" style="left:721px;top:292px;height:22px"></div>
<div class="abs" style="left:1px;top:314px;width:770px;height:22px;background:#fff"></div>
<div class="dh" style="left:1px;top:335px;width:1009px"></div>
<div class="dv" style="left:90px;top:314px;height:22px"></div>
<div class="dv" style="left:180px;top:314px;height:22px"></div>
<div class="vl" style="left:270px;top:314px;height:22px;background:#c9c9ce"></div>
<div class="dv" style="left:360px;top:314px;height:22px"></div>
<div class="dv" style="left:450px;top:314px;height:22px"></div>
<div class="vl" style="left:541px;top:314px;height:22px;background:#c9c9ce"></div>
<div class="dv" style="left:631px;top:314px;height:22px"></div>
<div class="dv" style="left:721px;top:314px;height:22px"></div>
<div class="abs" style="left:1px;top:336px;width:1010px;height:22px;background:#2869b8"></div>
<div class="abs" style="left:1px;top:358px;width:770px;height:22px;background:#fff"></div>
<div class="dh" style="left:1px;top:379px;width:1009px"></div>
<div class="dv" style="left:90px;top:358px;height:22px"></div>
<div class="dv" style="left:180px;top:358px;height:22px"></div>
<div class="vl" style="left:270px;top:358px;height:22px;background:#c9c9ce"></div>
<div class="dv" style="left:360px;top:358px;height:22px"></div>
<div class="dv" style="left:450px;top:358px;height:22px"></div>
<div class="vl" style="left:541px;top:358px;height:22px;background:#c9c9ce"></div>
<div class="dv" style="left:631px;top:358px;height:22px"></div>
<div class="dv" style="left:721px;top:358px;height:22px"></div>
<div class="abs" style="left:1px;top:380px;width:770px;height:22px;background:#fff"></div>
<div class="dh" style="left:1px;top:401px;width:1009px"></div>
<div class="dv" style="left:90px;top:380px;height:22px"></div>
<div class="dv" style="left:180px;top:380px;height:22px"></div>
<div class="vl" style="left:270px;top:380px;height:22px;background:#c9c9ce"></div>
<div class="dv" style="left:360px;top:380px;height:22px"></div>
<div class="dv" style="left:450px;top:380px;height:22px"></div>
<div class="vl" style="left:541px;top:380px;height:22px;background:#c9c9ce"></div>
<div class="dv" style="left:631px;top:380px;height:22px"></div>
<div class="dv" style="left:721px;top:380px;height:22px"></div>
<div class="abs" style="left:1px;top:402px;width:770px;height:22px;background:#fff"></div>
<div class="dh" style="left:1px;top:423px;width:1009px"></div>
<div class="dv" style="left:90px;top:402px;height:22px"></div>
<div class="dv" style="left:180px;top:402px;height:22px"></div>
<div class="vl" style="left:270px;top:402px;height:22px;background:#c9c9ce"></div>
<div class="dv" style="left:360px;top:402px;height:22px"></div>
<div class="dv" style="left:450px;top:402px;height:22px"></div>
<div class="vl" style="left:541px;top:402px;height:22px;background:#c9c9ce"></div>
<div class="dv" style="left:631px;top:402px;height:22px"></div>
<div class="dv" style="left:721px;top:402px;height:22px"></div>
<div class="abs" style="left:771px;top:0;width:243px;height:50px;background:#fff"></div>
<div class="hl" style="left:771px;top:24px;width:243px;background:#c9c9ce"></div>
<div class="hl" style="left:771px;top:50px;width:243px;background:#c9c9ce"></div>
<div class="c g" style="left:771px;top:4px;width:240px;line-height:18px">Суммарно</div>
<svg class="ic" style="left:785px;top:3px;stroke-width:2.1;stroke:#55555e" width="21" height="21" viewBox="0 0 24 24" ><path d="M17.5 2.3L6.5 12l11 9.7"/></svg>
<svg class="ic" style="left:976.5px;top:3px;stroke-width:2.1;stroke:#55555e" width="21" height="21" viewBox="0 0 24 24" ><path d="M6.5 2.3L17.5 12 6.5 21.7"/></svg>
<div class="c g" style="left:771px;top:29px;width:80px;line-height:18px">Согл.план</div>
<div class="c g" style="left:851px;top:29px;width:80px;line-height:18px">Опер.план</div>
<div class="dv" style="left:849px;top:25px;height:25px"></div>
<div class="c g" style="left:931px;top:29px;width:80px;line-height:18px">Факт</div>
<div class="dv" style="left:929px;top:25px;height:25px"></div>
<div class="abs" style="left:771px;top:50px;width:240px;height:22px;background:#17375e"></div>
<div class="abs" style="left:771px;top:72px;width:240px;height:22px;background:#1c4779"></div>
<div class="abs" style="left:771px;top:94px;width:240px;height:22px;background:#21599b"></div>
<div class="abs" style="left:771px;top:116px;width:240px;height:21px;background:#f3f3f5"></div>
<div class="dh" style="left:771px;top:137px;width:240px"></div>
<div class="dv" style="left:851px;top:116px;height:22px"></div>
<div class="dv" style="left:931px;top:116px;height:22px"></div>
<div class="c g" style="left:771px;top:116px;width:80px;line-height:24px">602</div>
<div class="c g" style="left:851px;top:116px;width:80px;line-height:24px">602</div>
<div class="c g" style="left:931px;top:116px;width:80px;line-height:24px">602</div>
<div class="abs" style="left:771px;top:138px;width:240px;height:21px;background:#f3f3f5"></div>
<div class="dh" style="left:771px;top:159px;width:240px"></div>
<div class="dv" style="left:851px;top:138px;height:22px"></div>
<div class="dv" style="left:931px;top:138px;height:22px"></div>
<div class="c g" style="left:771px;top:138px;width:80px;line-height:24px">1 500</div>
<div class="c g" style="left:851px;top:138px;width:80px;line-height:24px">1 500</div>
<div class="c g" style="left:931px;top:138px;width:80px;line-height:24px">1 500</div>
<div class="abs" style="left:771px;top:160px;width:240px;height:21px;background:#ffffcc"></div>
<div class="dh" style="left:771px;top:181px;width:240px"></div>
<div class="dv" style="left:851px;top:160px;height:22px"></div>
<div class="dv" style="left:931px;top:160px;height:22px"></div>
<div class="c g" style="left:771px;top:160px;width:80px;line-height:24px">37</div>
<div class="c g" style="left:851px;top:160px;width:80px;line-height:24px">37</div>
<div class="c g" style="left:931px;top:160px;width:80px;line-height:24px">28.5</div>
<div class="abs" style="left:771px;top:182px;width:240px;height:22px;background:#21599b"></div>
<div class="abs" style="left:771px;top:204px;width:240px;height:22px;background:#2869b8"></div>
<div class="abs" style="left:771px;top:226px;width:240px;height:21px;background:#f3f3f5"></div>
<div class="dh" style="left:771px;top:247px;width:240px"></div>
<div class="dv" style="left:851px;top:226px;height:22px"></div>
<div class="dv" style="left:931px;top:226px;height:22px"></div>
<div class="c g" style="left:771px;top:226px;width:80px;line-height:24px">4</div>
<div class="c g" style="left:851px;top:226px;width:80px;line-height:24px">4</div>
<div class="c g" style="left:931px;top:226px;width:80px;line-height:24px">4</div>
<div class="abs" style="left:771px;top:248px;width:240px;height:21px;background:#f3f3f5"></div>
<div class="dh" style="left:771px;top:269px;width:240px"></div>
<div class="dv" style="left:851px;top:248px;height:22px"></div>
<div class="dv" style="left:931px;top:248px;height:22px"></div>
<div class="c g" style="left:771px;top:248px;width:80px;line-height:24px">4</div>
<div class="c g" style="left:851px;top:248px;width:80px;line-height:24px">4</div>
<div class="c g" style="left:931px;top:248px;width:80px;line-height:24px">4</div>
<div class="abs" style="left:771px;top:270px;width:240px;height:21px;background:#f3f3f5"></div>
<div class="dh" style="left:771px;top:291px;width:240px"></div>
<div class="dv" style="left:851px;top:270px;height:22px"></div>
<div class="dv" style="left:931px;top:270px;height:22px"></div>
<div class="c g" style="left:771px;top:270px;width:80px;line-height:24px">4</div>
<div class="c g" style="left:851px;top:270px;width:80px;line-height:24px">4</div>
<div class="c g" style="left:931px;top:270px;width:80px;line-height:24px">4</div>
<div class="abs" style="left:771px;top:292px;width:240px;height:21px;background:#f3f3f5"></div>
<div class="dh" style="left:771px;top:313px;width:240px"></div>
<div class="dv" style="left:851px;top:292px;height:22px"></div>
<div class="dv" style="left:931px;top:292px;height:22px"></div>
<div class="c g" style="left:771px;top:292px;width:80px;line-height:24px">4</div>
<div class="c g" style="left:851px;top:292px;width:80px;line-height:24px">4</div>
<div class="c g" style="left:931px;top:292px;width:80px;line-height:24px">4</div>
<div class="abs" style="left:771px;top:314px;width:240px;height:21px;background:#f3f3f5"></div>
<div class="dh" style="left:771px;top:335px;width:240px"></div>
<div class="dv" style="left:851px;top:314px;height:22px"></div>
<div class="dv" style="left:931px;top:314px;height:22px"></div>
<div class="c g" style="left:771px;top:314px;width:80px;line-height:24px">55</div>
<div class="c g" style="left:851px;top:314px;width:80px;line-height:24px">55</div>
<div class="c g" style="left:931px;top:314px;width:80px;line-height:24px">55</div>
<div class="abs" style="left:771px;top:336px;width:240px;height:22px;background:#2869b8"></div>
<div class="abs" style="left:771px;top:358px;width:240px;height:21px;background:#f3f3f5"></div>
<div class="dh" style="left:771px;top:379px;width:240px"></div>
<div class="dv" style="left:851px;top:358px;height:22px"></div>
<div class="dv" style="left:931px;top:358px;height:22px"></div>
<div class="c g" style="left:771px;top:358px;width:80px;line-height:24px">28</div>
<div class="c g" style="left:851px;top:358px;width:80px;line-height:24px">28</div>
<div class="c g" style="left:931px;top:358px;width:80px;line-height:24px">28</div>
<div class="abs" style="left:771px;top:380px;width:240px;height:21px;background:#f3f3f5"></div>
<div class="dh" style="left:771px;top:401px;width:240px"></div>
<div class="dv" style="left:851px;top:380px;height:22px"></div>
<div class="dv" style="left:931px;top:380px;height:22px"></div>
<div class="c g" style="left:771px;top:380px;width:80px;line-height:24px">30.7</div>
<div class="c g" style="left:851px;top:380px;width:80px;line-height:24px">30.7</div>
<div class="c g" style="left:931px;top:380px;width:80px;line-height:24px">30.7</div>
<div class="abs" style="left:771px;top:402px;width:240px;height:21px;background:#f3f3f5"></div>
<div class="dh" style="left:771px;top:423px;width:240px"></div>
<div class="dv" style="left:851px;top:402px;height:22px"></div>
<div class="dv" style="left:931px;top:402px;height:22px"></div>
<div class="c g" style="left:771px;top:402px;width:80px;line-height:24px">2.75</div>
<div class="c g" style="left:851px;top:402px;width:80px;line-height:24px">2.75</div>
<div class="c g" style="left:931px;top:402px;width:80px;line-height:24px">2.75</div>
<div class="vl" style="left:771px;top:0;height:432px;background:#b3b3c0"></div>
<div class="vl" style="left:1008px;top:25px;height:25px;background:#c9c9ce"></div>
<div class="abs" style="left:0;top:424px;width:1014px;height:15px;background:#f4f4f6"></div>
<div class="abs" style="left:0;top:424px;width:1011px;height:2px;background:#5b8fd0"></div>
<div class="abs" style="left:0;top:424px;width:1011px;height:0;border-top:1px dashed #c9dcf2"></div>
<div class="abs" style="left:280px;top:427px;width:19px;height:6px;background:#dcdcdf;border-radius:3px"></div>
<div class="abs" style="left:0;top:433px;width:1014px;height:6px;background:#dcdcdf"></div>
<div class="abs" style="left:1011px;top:0;width:3px;height:433px;background:#f4f4f6"></div>
<div class="abs" style="left:1011px;top:1px;width:3px;height:42px;background:#d6d6db;border-radius:2px"></div>
</div>
<div class="abs" style="left:898px;top:45px;width:6px;height:483px;background:#b4b4bb"></div>
<div class="abs" id="bp" style="left:44px;top:532px;width:1873px;height:384px;overflow:hidden;background:#fff">
<div class="t tab" style="left:47px;top:13px;font-size:16.5px;line-height:22px;color:#45454d;letter-spacing:0.45px;margin-left:1px">Карточка работы</div>
<div class="t tab" style="left:279px;top:13px;font-size:16.5px;line-height:22px;color:#45454d;letter-spacing:0.45px;margin-left:1px">Связи работы</div>
<div class="t tab" style="left:485px;top:13px;font-size:16.5px;line-height:22px;color:#45454d;letter-spacing:0.45px;margin-left:1px">Связанные графики</div>
<div class="t tab" style="left:742px;top:13px;font-size:16.5px;line-height:22px;color:#45454d;letter-spacing:0.45px;margin-left:1px">Справочники</div>
<div class="t tab" style="left:944px;top:13px;font-size:16.5px;line-height:22px;color:#1976d2;letter-spacing:0.45px;margin-left:1px">Суточное планирование</div>
<div class="t tab" style="left:1235px;top:13px;font-size:16.5px;line-height:22px;color:#45454d;letter-spacing:0.45px;margin-left:1px">Фото / Документация</div>
<div class="t tab" style="left:1503px;top:13px;font-size:16.5px;line-height:22px;color:#45454d;letter-spacing:0.45px;margin-left:1px">Запросы и поручения</div>
<div class="t tab" style="left:1773px;top:13px;font-size:16.5px;line-height:22px;color:#45454d;letter-spacing:0.45px;margin-left:1px">Табели</div>
<div class="abs" style="left:897px;top:44px;width:291px;height:2px;background:#1976d2"></div>
<div class="t" id="info" style="left:8px;top:53px;font-size:14.3px;letter-spacing:0.28px;line-height:20px">01.03 Устройство песчаного основания. Сроки 04.05.2025 - 05.05.2025. Прогресс: 100%. Исполнитель: ООО "Георесурс".</div>
<svg class="ic" style="left:855px;top:64px" width="24" height="24" viewBox="0 0 24 24" ><circle cx="12" cy="12" r="10.5"/><path d="M6 12.5l2.5 2.5 5-5.5M11.5 14l1.2 1 5-5.5" stroke-width="1.8"/></svg>
<svg class="ic" style="left:899px;top:64px;stroke-width:1.6;stroke:#b4b4bb" width="24" height="24" viewBox="0 0 24 24" ><circle cx="12" cy="12" r="10.5"/><path d="M7.5 12.5l3 3 6-6.5"/></svg>
<svg class="ic" style="left:943px;top:64px;stroke-width:1.6;stroke:#b4b4bb" width="24" height="24" viewBox="0 0 24 24" ><circle cx="12" cy="12" r="10.5"/><path d="M8 8l8 8M16 8l-8 8"/></svg>
<div class="vl" style="left:977px;top:53px;height:45px"></div>
<div class="vl" style="left:1118px;top:53px;height:45px"></div>
<div class="vl" style="left:1386px;top:53px;height:45px"></div>
<div class="vl" style="left:1520px;top:53px;height:45px"></div>
<div class="vl" style="left:1565px;top:53px;height:45px"></div>
<div class="vl" style="left:1744.5px;top:53px;height:45px"></div>
<div class="c" style="left:991px;top:61.7px;width:34px;font-size:14.5px;line-height:14px;color:#45454d;-webkit-text-stroke:0.4px #45454d">123</div>
<svg class="ic" style="left:996px;top:64.5px" width="24" height="24" viewBox="0 0 24 24" ><path d="M1 18h22M4.5 14.5L1 18l3.5 3.5M19.5 14.5L23 18l-3.5 3.5"/></svg>
<svg class="ic" style="left:1040px;top:63px;stroke-width:1.8" width="24" height="24" viewBox="0 0 24 24" ><path d="M13 5.3h9.5M19 1.8l3.5 3.5-3.5 3.5M1.5 19.5H11M5 16l-3.5 3.5L5 23"/></svg>
<div class="c" style="left:1040px;top:61.5px;width:10px;font-size:14px;line-height:14px;color:#45454d;-webkit-text-stroke:0.5px #45454d">!</div>
<div class="c" style="left:1053.5px;top:74.5px;width:10px;font-size:13.5px;line-height:14px;color:#45454d;-webkit-text-stroke:0.5px #45454d">?</div>
<svg class="ic" style="left:1084px;top:64px" width="24" height="24" viewBox="0 0 24 24" ><path d="M1.5 4.5h21M5.2 4.5v16a2.5 2.5 0 0 0 2.5 2.5h8.6a2.5 2.5 0 0 0 2.5-2.5v-16"/><path d="M7.3 3.8c1-3.6 8.4-3.6 9.4 0z" fill="#45454d"/></svg>
<div class="t" style="left:1127px;top:67px;font-size:14.3px;line-height:20px">Вид:</div>
<svg class="ic" style="left:1176px;top:64px" width="24" height="24" viewBox="0 0 24 24" ><g fill="#45454d" stroke="none"><circle cx="12" cy="2.6" r="1.8"/><path d="M1.2 9.5L3.2 6.2 9.5 4.8Q12.5 5 13 7l.8 5.4-2.2.6-.8-4-4.3 2.2z"/><path d="M12.3 22.8L16 18.6l1.4 1.3 2.1-6.4 4.5 9.3z"/></g><path d="M5.2 12L1.5 22.5M7 12.5l2.3 4.7v5.3" stroke-width="2.1"/><path d="M2.8 11L17 19.5" stroke-width="1.6"/></svg>
<svg class="ic" style="left:1220.5px;top:64px" width="24" height="24" viewBox="0 0 24 24" ><path d="M3.3 23.8c0-5 3.5-8 8.7-8s8.7 3 8.7 8M8 8a4 4 0 0 0 8 0"/><path d="M6.3 7c0-3.6 2.4-6.2 5.7-6.2s5.7 2.6 5.7 6.2z" fill="#45454d" stroke-width="1"/><path d="M4.9 7.2h14.2M12 0.3v2"/></svg>
<svg class="ic" style="left:1264.5px;top:64px" width="24" height="24" viewBox="0 0 24 24" ><g stroke-width="1.7"><path d="M7.1 12.7v2.9c0 1.21 2.25 2.2 5 2.2s5-0.99 5-2.2V12.7" fill="#fff"/><path d="M7.1 9.8v2.9c0 1.21 2.25 2.2 5 2.2s5-0.99 5-2.2V9.8" fill="#fff"/><path d="M7.1 6.9v2.9c0 1.21 2.25 2.2 5 2.2s5-0.99 5-2.2V6.9" fill="#fff"/><path d="M7.1 4v2.9c0 1.21 2.25 2.2 5 2.2s5-0.99 5-2.2V4" fill="#fff"/><ellipse cx="12.1" cy="4" rx="5" ry="2.2" fill="#fff"/><path d="M1.2000000000000002 18v2.8c0 1.21 2.25 2.2 5 2.2s5-0.99 5-2.2V18" fill="#fff"/><path d="M1.2000000000000002 15.2v2.8c0 1.21 2.25 2.2 5 2.2s5-0.99 5-2.2V15.2" fill="#fff"/><ellipse cx="6.2" cy="15.2" rx="5" ry="2.2" fill="#fff"/><path d="M12.899999999999999 17.6v2.8c0 1.21 2.25 2.2 5 2.2s5-0.99 5-2.2V17.6" fill="#fff"/><path d="M12.899999999999999 14.8v2.8c0 1.21 2.25 2.2 5 2.2s5-0.99 5-2.2V14.8" fill="#fff"/><path d="M12.899999999999999 12v2.8c0 1.21 2.25 2.2 5 2.2s5-0.99 5-2.2V12" fill="#fff"/><ellipse cx="17.9" cy="12" rx="5" ry="2.2" fill="#fff"/></g></svg>
<svg class="ic" style="left:1308.5px;top:64px" width="24" height="24" viewBox="0 0 24 24" ><path d="M0.8 10.5h22.4" stroke-width="2.2"/><path d="M2.2 11.2l3.2 5M21.8 11.2l-3.2 5M4.5 13.8h15M9.5 18.8h5" stroke-width="1.7"/><circle cx="4.9" cy="18.8" r="2.1" stroke-width="1.7"/><circle cx="19.1" cy="18.8" r="2.1" stroke-width="1.7"/><path d="M3.6 8.2L8.8 4.5l1.7 1.5 4-3.2 5.8 5.4z" fill="#45454d" stroke-width="0.8"/></svg>
<svg class="ic" style="left:1352.5px;top:64px" width="24" height="24" viewBox="0 0 24 24" ><g stroke-width="1.5"><path d="M8 7.199999999999999v2.3c0 0.94 1.94 1.7 4.3 1.7s4.3-0.77 4.3-1.7V7.199999999999999" fill="#fff"/><path d="M8 4.9v2.3c0 0.94 1.94 1.7 4.3 1.7s4.3-0.77 4.3-1.7V4.9" fill="#fff"/><path d="M8 2.6v2.3c0 0.94 1.94 1.7 4.3 1.7s4.3-0.77 4.3-1.7V2.6" fill="#fff"/><ellipse cx="12.3" cy="2.6" rx="4.3" ry="1.7" fill="#fff"/><path d="M2.7 12.4v2.4c0 0.94 1.94 1.7 4.3 1.7s4.3-0.77 4.3-1.7V12.4" fill="#fff"/><path d="M2.7 10v2.4c0 0.94 1.94 1.7 4.3 1.7s4.3-0.77 4.3-1.7V10" fill="#fff"/><ellipse cx="7" cy="10" rx="4.3" ry="1.7" fill="#fff"/><path d="M13.2 12.1v2.4c0 0.94 1.94 1.7 4.3 1.7s4.3-0.77 4.3-1.7V12.1" fill="#fff"/><path d="M13.2 9.7v2.4c0 0.94 1.94 1.7 4.3 1.7s4.3-0.77 4.3-1.7V9.7" fill="#fff"/><path d="M13.2 7.3v2.4c0 0.94 1.94 1.7 4.3 1.7s4.3-0.77 4.3-1.7V7.3" fill="#fff"/><ellipse cx="17.5" cy="7.3" rx="4.3" ry="1.7" fill="#fff"/><path d="M2 20.5h19.5M18.7 18l3 2.5-3 2.5"/></g></svg>
<svg class="ic" style="left:1398px;top:64px" width="24" height="24" viewBox="0 0 24 24" ><rect x="3" y="3.5" width="18" height="19.5" rx="2.5"/><path d="M7 5.5V2.3a1 1 0 0 1 1-1h8a1 1 0 0 1 1 1V5.5z" fill="#45454d"/><path d="M12 9.5v6M12 18.5v.01"/></svg>
<svg class="ic" style="left:1442px;top:64px" width="24" height="24" viewBox="0 0 24 24" ><rect x="3" y="3.5" width="18" height="19.5" rx="2.5"/><path d="M7 5.5V2.3a1 1 0 0 1 1-1h8a1 1 0 0 1 1 1V5.5z" fill="#45454d"/><path d="M9.5 11a2.5 2.5 0 1 1 3.5 2.3c-.7.4-1 .9-1 1.7M12 18.5v.01" stroke-width="1.7"/></svg>
<svg class="ic" style="left:1486px;top:64px" width="24" height="24" viewBox="0 0 24 24" ><rect x="3" y="3.5" width="18" height="19.5" rx="2.5"/><path d="M7 5.5V2.3a1 1 0 0 1 1-1h8a1 1 0 0 1 1 1V5.5z" fill="#45454d"/><path d="M8 14l3 3 5.5-6"/></svg>
<svg class="ic" style="left:1531px;top:64px" width="24" height="24" viewBox="0 0 24 24" ><rect x="2" y="4" width="20" height="19.5" rx="3"/><path d="M2 9.5h20M7.5 0.5v3.5M16.5 0.5v3.5"/><path d="M7 9.5v13.5M12 9.5v13.5M17 9.5v13.5" stroke-linecap="butt"/></svg>
<div class="t" style="left:1574px;top:67px;font-size:14.3px;letter-spacing:0.3px;line-height:20px">Переходы:</div>
<svg class="ic" style="left:1666px;top:64px;stroke-width:1.6;stroke:#b4b4bb" width="24" height="24" viewBox="0 0 24 24" ><rect x="2" y="4" width="20" height="19.5" rx="3"/><path d="M2 9.5h20M7.5 0.5v3.5M16.5 0.5v3.5"/><path d="M5.5 9.5v14"/><path d="M15.5 12.5v7l-5.5-3.5z" fill="#45454d" stroke-width="1"/></svg>
<svg class="ic" style="left:1710px;top:64px;stroke-width:1.6;stroke:#b4b4bb" width="24" height="24" viewBox="0 0 24 24" ><rect x="2" y="4" width="20" height="19.5" rx="3"/><path d="M2 9.5h20M7.5 0.5v3.5M16.5 0.5v3.5"/><path d="M5.5 9.5v14"/><path d="M10 12.5v7l5.5-3.5z" fill="#45454d" stroke-width="1"/></svg>
<svg class="ic" style="left:1755px;top:64px" width="24" height="24" viewBox="0 0 24 24" ><rect x="2" y="4" width="20" height="19.5" rx="3"/><path d="M2 9.5h20M7.5 0.5v3.5M16.5 0.5v3.5"/><text x="12" y="21" text-anchor="middle" font-family="Liberation Sans,sans-serif" font-weight="bold" font-size="12" fill="#45454d" stroke="none">S</text></svg>
<svg class="ic" style="left:1799px;top:64px" width="24" height="24" viewBox="0 0 24 24" ><rect x="2" y="4" width="20" height="19.5" rx="3"/><path d="M2 9.5h20M7.5 0.5v3.5M16.5 0.5v3.5"/><text x="12" y="21" text-anchor="middle" font-family="Liberation Sans,sans-serif" font-weight="bold" font-size="12" fill="#45454d" stroke="none">D</text></svg>
<svg class="ic" style="left:1843px;top:64px" width="24" height="24" viewBox="0 0 24 24" ><rect x="2" y="4" width="20" height="19.5" rx="3"/><path d="M2 9.5h20M7.5 0.5v3.5M16.5 0.5v3.5"/><text x="12" y="21" text-anchor="middle" font-family="Liberation Sans,sans-serif" font-weight="bold" font-size="12" fill="#45454d" stroke="none">F</text></svg>
<div class="abs" style="left:1663px;top:60px;width:78px;height:38px;border:3px solid #f00000;border-radius:8px"></div>
<div class="abs" style="left:1750px;top:60px;width:121px;height:38px;border:3px solid #f00000;border-radius:8px"></div>
<div class="hl" style="left:0;top:98px;width:1873px;background:#c3c3c9"></div>
<div class="hl" style="left:0;top:123px;width:1873px;background:#c3c3c9"></div>
<div class="hl" style="left:0;top:148px;width:1873px;background:#c3c3c9"></div>
<div class="c g" style="left:0px;top:128px;width:139px;line-height:18px;letter-spacing:0">Тип</div>
<div class="vl" style="left:139px;top:123px;height:245px;background:#c3c3c9"></div>
<div class="c g" style="left:139px;top:128px;width:120px;line-height:18px;letter-spacing:0">Наименование</div>
<div class="vl" style="left:259px;top:123px;height:245px;background:#c3c3c9"></div>
<div class="c g" style="left:259px;top:128px;width:120px;line-height:18px;letter-spacing:0">Входит в комплек...</div>
<div class="vl" style="left:379px;top:123px;height:245px;background:#c3c3c9"></div>
<div class="c g" style="left:379px;top:128px;width:101px;line-height:18px">План</div>
<div class="vl" style="left:480px;top:123px;height:245px;background:#c3c3c9"></div>
<div class="c g" style="left:480px;top:128px;width:100px;line-height:18px">Факт</div>
<div class="vl" style="left:580px;top:123px;height:245px;background:#c3c3c9"></div>
<div class="c g" style="left:580px;top:128px;width:100px;line-height:18px">Остаток</div>
<div class="vl" style="left:680px;top:123px;height:245px;background:#c3c3c9"></div>
<div class="c g" style="left:680px;top:128px;width:120px;line-height:18px">Нераспределенн...</div>
<div class="vl" style="left:800px;top:123px;height:245px;background:#c3c3c9"></div>
<div class="c g" style="left:800px;top:128px;width:100px;line-height:18px">Долг</div>
<div class="vl" style="left:900px;top:98px;height:270px;background:#c3c3c9"></div>
<div class="hl" style="left:0;top:192px;width:900px;background:#c3c3c9"></div>
<div class="abs" style="left:801px;top:149px;width:99px;height:43px;background:#ff8585"></div>
<svg class="ic" style="left:10px;top:161.5px;stroke-width:1.9" width="17" height="17" viewBox="0 0 24 24" ><g fill="#45454d" stroke="none"><circle cx="12" cy="2.6" r="1.8"/><path d="M1.2 9.5L3.2 6.2 9.5 4.8Q12.5 5 13 7l.8 5.4-2.2.6-.8-4-4.3 2.2z"/><path d="M12.3 22.8L16 18.6l1.4 1.3 2.1-6.4 4.5 9.3z"/></g><path d="M5.2 12L1.5 22.5M7 12.5l2.3 4.7v5.3" stroke-width="2.1"/><path d="M2.8 11L17 19.5" stroke-width="1.6"/></svg>
<div class="t g" style="letter-spacing:0;left:35px;top:163px;line-height:18px;width:104px;overflow:hidden">Физобъем</div>
<div class="t g" style="letter-spacing:0.1px;left:150px;top:163px;line-height:18px;width:109px;overflow:hidden">Устройство песчаного</div>
<div class="c g" style="left:379px;top:163px;width:101px;line-height:18px">37</div>
<div class="c g" style="left:480px;top:163px;width:100px;line-height:18px">28.5</div>
<div class="c g" style="left:580px;top:163px;width:100px;line-height:18px">8.5</div>
<div class="c g" style="left:680px;top:163px;width:120px;line-height:18px">0</div>
<div class="c g" style="left:800px;top:163px;width:100px;line-height:18px">8.5</div>
<div class="hl" style="left:0;top:236px;width:900px;background:#c3c3c9"></div>
<svg class="ic" style="left:10px;top:205.5px;stroke-width:1.9" width="17" height="17" viewBox="0 0 24 24" ><path d="M3.3 23.8c0-5 3.5-8 8.7-8s8.7 3 8.7 8M8 8a4 4 0 0 0 8 0"/><path d="M6.3 7c0-3.6 2.4-6.2 5.7-6.2s5.7 2.6 5.7 6.2z" fill="#45454d" stroke-width="1"/><path d="M4.9 7.2h14.2M12 0.3v2"/></svg>
<div class="t g" style="letter-spacing:0;left:35px;top:207px;line-height:18px;width:104px;overflow:hidden">Трудозатраты</div>
<div class="t g" style="letter-spacing:0.1px;left:150px;top:207px;line-height:18px;width:109px;overflow:hidden"></div>
<div class="c g" style="left:379px;top:207px;width:101px;line-height:18px">86</div>
<div class="c g" style="left:480px;top:207px;width:100px;line-height:18px">86</div>
<div class="c g" style="left:580px;top:207px;width:100px;line-height:18px">0</div>
<div class="c g" style="left:680px;top:207px;width:120px;line-height:18px">0</div>
<div class="c g" style="left:800px;top:207px;width:100px;line-height:18px">0</div>
<div class="hl" style="left:0;top:280px;width:900px;background:#c3c3c9"></div>
<svg class="ic" style="left:10px;top:249.5px;stroke-width:1.9" width="17" height="17" viewBox="0 0 24 24" ><g stroke-width="1.7"><path d="M7.1 12.7v2.9c0 1.21 2.25 2.2 5 2.2s5-0.99 5-2.2V12.7" fill="#fff"/><path d="M7.1 9.8v2.9c0 1.21 2.25 2.2 5 2.2s5-0.99 5-2.2V9.8" fill="#fff"/><path d="M7.1 6.9v2.9c0 1.21 2.25 2.2 5 2.2s5-0.99 5-2.2V6.9" fill="#fff"/><path d="M7.1 4v2.9c0 1.21 2.25 2.2 5 2.2s5-0.99 5-2.2V4" fill="#fff"/><ellipse cx="12.1" cy="4" rx="5" ry="2.2" fill="#fff"/><path d="M1.2000000000000002 18v2.8c0 1.21 2.25 2.2 5 2.2s5-0.99 5-2.2V18" fill="#fff"/><path d="M1.2000000000000002 15.2v2.8c0 1.21 2.25 2.2 5 2.2s5-0.99 5-2.2V15.2" fill="#fff"/><ellipse cx="6.2" cy="15.2" rx="5" ry="2.2" fill="#fff"/><path d="M12.899999999999999 17.6v2.8c0 1.21 2.25 2.2 5 2.2s5-0.99 5-2.2V17.6" fill="#fff"/><path d="M12.899999999999999 14.8v2.8c0 1.21 2.25 2.2 5 2.2s5-0.99 5-2.2V14.8" fill="#fff"/><path d="M12.899999999999999 12v2.8c0 1.21 2.25 2.2 5 2.2s5-0.99 5-2.2V12" fill="#fff"/><ellipse cx="17.9" cy="12" rx="5" ry="2.2" fill="#fff"/></g></svg>
<div class="t g" style="letter-spacing:0;left:35px;top:251px;line-height:18px;width:104px;overflow:hidden">Стоимость</div>
<div class="t g" style="letter-spacing:0.1px;left:150px;top:251px;line-height:18px;width:109px;overflow:hidden"></div>
<div class="c g" style="left:379px;top:251px;width:101px;line-height:18px">28 490</div>
<div class="c g" style="left:480px;top:251px;width:100px;line-height:18px">28 490</div>
<div class="c g" style="left:580px;top:251px;width:100px;line-height:18px">0</div>
<div class="c g" style="left:680px;top:251px;width:120px;line-height:18px">0</div>
<div class="c g" style="left:800px;top:251px;width:100px;line-height:18px">0</div>
<div class="hl" style="left:0;top:324px;width:900px;background:#c3c3c9"></div>
<div class="abs" style="left:681px;top:281px;width:119px;height:43px;background:#ffff80"></div>
<svg class="ic" style="left:10px;top:293.5px;stroke-width:1.9" width="17" height="17" viewBox="0 0 24 24" ><g stroke-width="1.5"><path d="M8 7.199999999999999v2.3c0 0.94 1.94 1.7 4.3 1.7s4.3-0.77 4.3-1.7V7.199999999999999" fill="#fff"/><path d="M8 4.9v2.3c0 0.94 1.94 1.7 4.3 1.7s4.3-0.77 4.3-1.7V4.9" fill="#fff"/><path d="M8 2.6v2.3c0 0.94 1.94 1.7 4.3 1.7s4.3-0.77 4.3-1.7V2.6" fill="#fff"/><ellipse cx="12.3" cy="2.6" rx="4.3" ry="1.7" fill="#fff"/><path d="M2.7 12.4v2.4c0 0.94 1.94 1.7 4.3 1.7s4.3-0.77 4.3-1.7V12.4" fill="#fff"/><path d="M2.7 10v2.4c0 0.94 1.94 1.7 4.3 1.7s4.3-0.77 4.3-1.7V10" fill="#fff"/><ellipse cx="7" cy="10" rx="4.3" ry="1.7" fill="#fff"/><path d="M13.2 12.1v2.4c0 0.94 1.94 1.7 4.3 1.7s4.3-0.77 4.3-1.7V12.1" fill="#fff"/><path d="M13.2 9.7v2.4c0 0.94 1.94 1.7 4.3 1.7s4.3-0.77 4.3-1.7V9.7" fill="#fff"/><path d="M13.2 7.3v2.4c0 0.94 1.94 1.7 4.3 1.7s4.3-0.77 4.3-1.7V7.3" fill="#fff"/><ellipse cx="17.5" cy="7.3" rx="4.3" ry="1.7" fill="#fff"/><path d="M2 20.5h19.5M18.7 18l3 2.5-3 2.5"/></g></svg>
<div class="t g" style="letter-spacing:0;left:35px;top:295px;line-height:18px;width:104px;overflow:hidden">Распределенная работа</div>
<div class="t g" style="letter-spacing:0.1px;left:150px;top:295px;line-height:18px;width:109px;overflow:hidden"></div>
<div class="c g" style="left:379px;top:295px;width:101px;line-height:18px">770</div>
<div class="c g" style="left:480px;top:295px;width:100px;line-height:18px"></div>
<div class="c g" style="left:580px;top:295px;width:100px;line-height:18px">770</div>
<div class="c g" style="left:680px;top:295px;width:120px;line-height:18px">770</div>
<div class="c g" style="left:800px;top:295px;width:100px;line-height:18px"></div>
<div class="hl" style="left:0;top:368px;width:900px;background:#c3c3c9"></div>
<div class="abs" style="left:681px;top:325px;width:119px;height:43px;background:#ffff80"></div>
<svg class="ic" style="left:10px;top:337.5px;stroke-width:1.9" width="17" height="17" viewBox="0 0 24 24" ><path d="M0.8 10.5h22.4" stroke-width="2.2"/><path d="M2.2 11.2l3.2 5M21.8 11.2l-3.2 5M4.5 13.8h15M9.5 18.8h5" stroke-width="1.7"/><circle cx="4.9" cy="18.8" r="2.1" stroke-width="1.7"/><circle cx="19.1" cy="18.8" r="2.1" stroke-width="1.7"/><path d="M3.6 8.2L8.8 4.5l1.7 1.5 4-3.2 5.8 5.4z" fill="#45454d" stroke-width="0.8"/></svg>
<div class="t g" style="letter-spacing:0;left:35px;top:339px;line-height:18px;width:104px;overflow:hidden">Машины и механизмы</div>
<div class="t g" style="letter-spacing:0.1px;left:150px;top:339px;line-height:18px;width:109px;overflow:hidden">Самосвал</div>
<div class="c g" style="left:379px;top:339px;width:101px;line-height:18px"></div>
<div class="c g" style="left:480px;top:339px;width:100px;line-height:18px"></div>
<div class="c g" style="left:580px;top:339px;width:100px;line-height:18px">2</div>
<div class="c g" style="left:680px;top:339px;width:120px;line-height:18px">2</div>
<div class="c g" style="left:800px;top:339px;width:100px;line-height:18px"></div>
<div class="abs" style="left:901px;top:149px;width:419px;height:219px;background:#c5dcf1"></div>
<div class="c g" style="left:901px;top:103px;width:209px;line-height:18px">04.05.2025</div>
<div class="c g" style="left:901px;top:128px;width:69px;line-height:18px">Согл.план</div>
<div class="dv" style="left:970px;top:124px;height:244px;border-left-color:#b4b4bc"></div>
<div class="c g" style="left:971px;top:128px;width:69px;line-height:18px">Опер.план</div>
<div class="dv" style="left:1040px;top:124px;height:244px;border-left-color:#b4b4bc"></div>
<div class="c g" style="left:1041px;top:128px;width:69px;line-height:18px">Факт</div>
<div class="vl" style="left:1110px;top:98px;height:270px;background:#c3c3c9"></div>
<div class="c g" style="left:1111px;top:103px;width:209px;line-height:18px">05.05.2025</div>
<div class="c g" style="left:1111px;top:128px;width:69px;line-height:18px">Согл.план</div>
<div class="dv" style="left:1180px;top:124px;height:244px;border-left-color:#b4b4bc"></div>
<div class="c g" style="left:1181px;top:128px;width:69px;line-height:18px">Опер.план</div>
<div class="dv" style="left:1250px;top:124px;height:244px;border-left-color:#b4b4bc"></div>
<div class="c g" style="left:1251px;top:128px;width:69px;line-height:18px">Факт</div>
<div class="vl" style="left:1320px;top:98px;height:270px;background:#c3c3c9"></div>
<div class="c g" style="left:1321px;top:103px;width:210px;line-height:18px">06.05.2025</div>
<div class="c g" style="left:1321px;top:128px;width:70px;line-height:18px">Согл.план</div>
<div class="dv" style="left:1391px;top:124px;height:244px;border-left-color:#b4b4bc"></div>
<div class="c g" style="left:1392px;top:128px;width:69px;line-height:18px">Опер.план</div>
<div class="dv" style="left:1461px;top:124px;height:244px;border-left-color:#b4b4bc"></div>
<div class="c g" style="left:1462px;top:128px;width:69px;line-height:18px">Факт</div>
<div class="vl" style="left:1531px;top:98px;height:270px;background:#c3c3c9"></div>
<div class="c g" style="left:1532px;top:103px;width:209px;line-height:18px">07.05.2025</div>
<div class="c g" style="left:1532px;top:128px;width:69px;line-height:18px">Согл.план</div>
<div class="dv" style="left:1601px;top:124px;height:244px;border-left-color:#b4b4bc"></div>
<div class="c g" style="left:1602px;top:128px;width:69px;line-height:18px">Опер.план</div>
<div class="dv" style="left:1671px;top:124px;height:244px;border-left-color:#b4b4bc"></div>
<div class="c g" style="left:1672px;top:128px;width:69px;line-height:18px">Факт</div>
<div class="vl" style="left:1741px;top:98px;height:270px;background:#c3c3c9"></div>
<div class="c g" style="left:1742px;top:103px;width:209px;line-height:18px">08.05.2025</div>
<div class="c g" style="left:1742px;top:128px;width:69px;line-height:18px">Согл.план</div>
<div class="dv" style="left:1811px;top:124px;height:244px;border-left-color:#b4b4bc"></div>
<div class="c g" style="left:1812px;top:128px;width:69px;line-height:18px">Опер.план</div>
<div class="dv" style="left:1881px;top:124px;height:244px;border-left-color:#b4b4bc"></div>
<div class="c g" style="left:1882px;top:128px;width:69px;line-height:18px">Факт</div>
<div class="vl" style="left:1951px;top:98px;height:270px;background:#c3c3c9"></div>
<div class="dh" style="left:901px;top:192px;width:972px;border-top-color:#b4b4bc"></div>
<div class="c g" style="left:901px;top:163px;width:69px;line-height:18px">18.5</div>
<div class="c g" style="left:971px;top:163px;width:69px;line-height:18px">18.5</div>
<div class="c g" style="left:1041px;top:163px;width:69px;line-height:18px">10</div>
<div class="abs" style="left:1041px;top:149px;width:0;height:0;border-top:19px solid #c00000;border-right:20px solid transparent"></div>
<div class="c g" style="left:1111px;top:163px;width:69px;line-height:18px">18.5</div>
<div class="c g" style="left:1181px;top:163px;width:69px;line-height:18px">18.5</div>
<div class="c g" style="left:1251px;top:163px;width:69px;line-height:18px">18.5</div>
<div class="abs" style="left:1251px;top:149px;width:0;height:0;border-top:19px solid #6fd45c;border-right:20px solid transparent"></div>
<div class="dh" style="left:901px;top:236px;width:972px;border-top-color:#b4b4bc"></div>
<div class="c g" style="left:901px;top:207px;width:69px;line-height:18px">43</div>
<div class="c g" style="left:971px;top:207px;width:69px;line-height:18px">43</div>
<div class="c g" style="left:1041px;top:207px;width:69px;line-height:18px">43</div>
<div class="abs" style="left:1041px;top:193px;width:0;height:0;border-top:19px solid #6fd45c;border-right:20px solid transparent"></div>
<div class="c g" style="left:1111px;top:207px;width:69px;line-height:18px">43</div>
<div class="c g" style="left:1181px;top:207px;width:69px;line-height:18px">43</div>
<div class="c g" style="left:1251px;top:207px;width:69px;line-height:18px">43</div>
<div class="abs" style="left:1251px;top:193px;width:0;height:0;border-top:19px solid #6fd45c;border-right:20px solid transparent"></div>
<div class="dh" style="left:901px;top:280px;width:972px;border-top-color:#b4b4bc"></div>
<div class="c g" style="left:901px;top:251px;width:69px;line-height:18px">14 245</div>
<div class="c g" style="left:971px;top:251px;width:69px;line-height:18px">14 245</div>
<div class="c g" style="left:1041px;top:251px;width:69px;line-height:18px">14 245</div>
<div class="abs" style="left:1041px;top:237px;width:0;height:0;border-top:19px solid #6fd45c;border-right:20px solid transparent"></div>
<div class="c g" style="left:1111px;top:251px;width:69px;line-height:18px">14 245</div>
<div class="c g" style="left:1181px;top:251px;width:69px;line-height:18px">14 245</div>
<div class="c g" style="left:1251px;top:251px;width:69px;line-height:18px">14 245</div>
<div class="abs" style="left:1251px;top:237px;width:0;height:0;border-top:19px solid #6fd45c;border-right:20px solid transparent"></div>
<div class="dh" style="left:901px;top:324px;width:972px;border-top-color:#b4b4bc"></div>
<div class="c g" style="left:901px;top:295px;width:69px;line-height:18px;font-weight:bold">770</div>
<div class="c g" style="left:971px;top:295px;width:69px;line-height:18px;font-weight:bold">770</div>
<div class="c g" style="left:1041px;top:295px;width:69px;line-height:18px;font-weight:bold">770</div>
<div class="c g" style="left:1111px;top:295px;width:69px;line-height:18px;font-weight:bold">770</div>
<div class="c g" style="left:1181px;top:295px;width:69px;line-height:18px;font-weight:bold">770</div>
<div class="c g" style="left:1251px;top:295px;width:69px;line-height:18px;font-weight:bold">770</div>
<div class="c g" style="left:1321px;top:295px;width:70px;line-height:18px;color:#a8a8a8">770</div>
<div class="c g" style="left:1392px;top:295px;width:69px;line-height:18px;color:#a8a8a8">770</div>
<div class="c g" style="left:1462px;top:295px;width:69px;line-height:18px;color:#a8a8a8">770</div>
<div class="c g" style="left:1532px;top:295px;width:69px;line-height:18px;color:#a8a8a8">770</div>
<div class="c g" style="left:1602px;top:295px;width:69px;line-height:18px;color:#a8a8a8">770</div>
<div class="c g" style="left:1672px;top:295px;width:69px;line-height:18px;color:#a8a8a8">770</div>
<div class="c g" style="left:1742px;top:295px;width:69px;line-height:18px;color:#a8a8a8">770</div>
<div class="c g" style="left:1812px;top:295px;width:69px;line-height:18px;color:#a8a8a8">770</div>
<div class="c g" style="left:1882px;top:295px;width:69px;line-height:18px;color:#a8a8a8">770</div>
<div class="dh" style="left:901px;top:368px;width:972px;border-top-color:#b4b4bc"></div>
<div class="abs" style="left:1870px;top:99px;width:3px;height:270px;background:#f7f7f9"></div>
<div class="abs" style="left:0;top:369px;width:1873px;height:11px;background:#f4f4f6"></div>
<div class="abs" style="left:0;top:380px;width:1873px;height:4px;background:#fff"></div>
<div class="abs" style="left:378px;top:370px;width:42px;height:10px;background:#dcdcdf;border-radius:4px 4px 0 0"></div>
</div>
<div class="abs" style="left:44px;top:528px;width:1873px;height:6px;background:#b4b4bb"></div>
<svg class="abs" style="left:0;top:0;overflow:visible;pointer-events:none" width="1" height="1"><path d="M1660.9 151.9V92" stroke="#000" stroke-width="3.2" fill="none"/><path d="M1660.9 84l-5.8 11.3h11.6z" fill="#000"/><ellipse cx="1660.9" cy="169.3" rx="15.6" ry="17.4" fill="#fff" stroke="#000" stroke-width="3.4"/><text x="1660.9" y="176.3" text-anchor="middle" font-family="Liberation Sans,sans-serif" font-size="19.5" fill="#000">1</text></svg>
<svg class="abs" style="left:0;top:0;overflow:visible;pointer-events:none" width="1" height="1"><path d="M1770.6 151.9V92" stroke="#000" stroke-width="3.2" fill="none"/><path d="M1770.6 84l-5.8 11.3h11.6z" fill="#000"/><ellipse cx="1770.6" cy="169.3" rx="15.6" ry="17.4" fill="#fff" stroke="#000" stroke-width="3.4"/><text x="1770.6" y="176.3" text-anchor="middle" font-family="Liberation Sans,sans-serif" font-size="19.5" fill="#000">2</text></svg>
<svg class="abs" style="left:0;top:0;overflow:visible;pointer-events:none" width="1" height="1"><path d="M1859.8 151.9V92" stroke="#000" stroke-width="3.2" fill="none"/><path d="M1859.8 84l-5.8 11.3h11.6z" fill="#000"/><ellipse cx="1859.8" cy="169.3" rx="15.6" ry="17.4" fill="#fff" stroke="#000" stroke-width="3.4"/><text x="1859.8" y="176.3" text-anchor="middle" font-family="Liberation Sans,sans-serif" font-size="19.5" fill="#000">3</text></svg>
<svg class="abs" style="left:0;top:0;overflow:visible;pointer-events:none" width="1" height="1"><path d="M1900.7 151.9V92" stroke="#000" stroke-width="3.2" fill="none"/><path d="M1900.7 84l-5.8 11.3h11.6z" fill="#000"/><ellipse cx="1900.7" cy="169.3" rx="15.6" ry="17.4" fill="#fff" stroke="#000" stroke-width="3.4"/><text x="1900.7" y="176.3" text-anchor="middle" font-family="Liberation Sans,sans-serif" font-size="19.5" fill="#000">4</text></svg>
<svg class="abs" style="left:0;top:0;overflow:visible;pointer-events:none" width="1" height="1"><path d="M1232.3 510.79999999999995V585" stroke="#000" stroke-width="3.2" fill="none"/><path d="M1232.3 593l-6.2-10.8h12.4z" fill="#000"/><ellipse cx="1232.3" cy="493.4" rx="15.6" ry="17.4" fill="#fff" stroke="#000" stroke-width="3.4"/><text x="1232.3" y="500.4" text-anchor="middle" font-family="Liberation Sans,sans-serif" font-size="19.5" fill="#000">5</text></svg>
<svg class="abs" style="left:0;top:0;overflow:visible;pointer-events:none" width="1" height="1"><path d="M1279.9 510.79999999999995V585" stroke="#000" stroke-width="3.2" fill="none"/><path d="M1279.9 593l-6.2-10.8h12.4z" fill="#000"/><ellipse cx="1279.9" cy="493.4" rx="15.6" ry="17.4" fill="#fff" stroke="#000" stroke-width="3.4"/><text x="1279.9" y="500.4" text-anchor="middle" font-family="Liberation Sans,sans-serif" font-size="19.5" fill="#000">6</text></svg>
<svg class="abs" style="left:0;top:0;overflow:visible;pointer-events:none" width="1" height="1"><path d="M1323.5 510.2V585" stroke="#000" stroke-width="3.2" fill="none"/><path d="M1323.5 593l-6.2-10.8h12.4z" fill="#000"/><ellipse cx="1323.5" cy="492.8" rx="15.6" ry="17.4" fill="#fff" stroke="#000" stroke-width="3.4"/><text x="1323.5" y="499.8" text-anchor="middle" font-family="Liberation Sans,sans-serif" font-size="19.5" fill="#000">7</text></svg>
<svg class="abs" style="left:0;top:0;overflow:visible;pointer-events:none" width="1" height="1"><path d="M1364.6 511.79999999999995V585" stroke="#000" stroke-width="3.2" fill="none"/><path d="M1364.6 593l-6.2-10.8h12.4z" fill="#000"/><ellipse cx="1364.6" cy="494.4" rx="15.6" ry="17.4" fill="#fff" stroke="#000" stroke-width="3.4"/><text x="1364.6" y="501.4" text-anchor="middle" font-family="Liberation Sans,sans-serif" font-size="19.5" fill="#000">8</text></svg>
<svg class="abs" style="left:0;top:0;overflow:visible;pointer-events:none" width="1" height="1"><path d="M1411.2 510.29999999999995V585" stroke="#000" stroke-width="3.2" fill="none"/><path d="M1411.2 593l-6.2-10.8h12.4z" fill="#000"/><ellipse cx="1411.2" cy="492.9" rx="15.6" ry="17.4" fill="#fff" stroke="#000" stroke-width="3.4"/><text x="1411.2" y="499.9" text-anchor="middle" font-family="Liberation Sans,sans-serif" font-size="19.5" fill="#000">9</text></svg>
<svg class="abs" style="left:0;top:0;overflow:visible;pointer-events:none" width="1" height="1"><path d="M1746.3 504V580.4" stroke="#000" stroke-width="3.2" fill="none"/><path d="M1746.3 588.4l-6.2-10.8h12.4z" fill="#000"/><ellipse cx="1746.3" cy="486.6" rx="15.6" ry="17.4" fill="#fff" stroke="#000" stroke-width="3.4"/><text x="1746.3" y="493.6" text-anchor="middle" font-family="Liberation Sans,sans-serif" font-size="19.5" fill="#000">1</text></svg>
<svg class="abs" style="left:0;top:0;overflow:visible;pointer-events:none" width="1" height="1"><path d="M1857.5 507.7V580.4" stroke="#000" stroke-width="3.2" fill="none"/><path d="M1857.5 588.4l-6.2-10.8h12.4z" fill="#000"/><ellipse cx="1857.5" cy="490.3" rx="15.6" ry="17.4" fill="#fff" stroke="#000" stroke-width="3.4"/><text x="1857.5" y="497.3" text-anchor="middle" font-family="Liberation Sans,sans-serif" font-size="19.5" fill="#000">2</text></svg>
</body></html>
